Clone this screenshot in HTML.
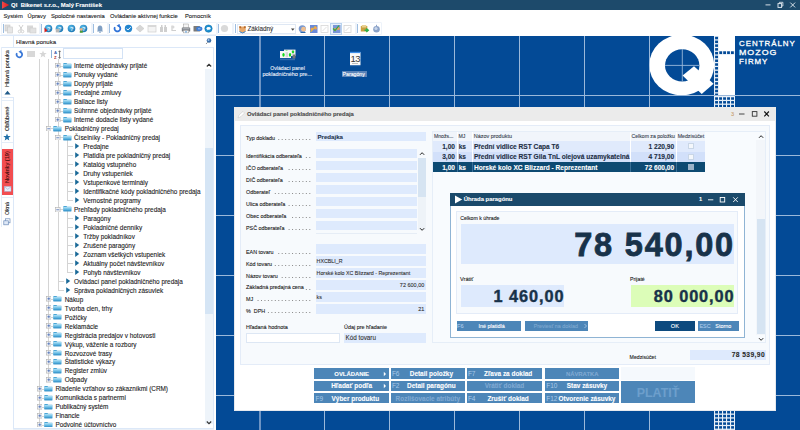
<!DOCTYPE html><html><head><meta charset="utf-8"><style>
*{margin:0;padding:0;box-sizing:border-box}
html,body{width:800px;height:430px;overflow:hidden;background:#fff;font-family:"Liberation Sans",sans-serif}
div{position:absolute}
.t{white-space:nowrap;line-height:1;-webkit-text-stroke:0.1px currentColor}
.vt{transform-origin:0 0;transform:rotate(-90deg)}
</style></head><body><div style="left:0px;top:0px;width:800px;height:10px;background:#1d4a6b"></div>
<svg style="position:absolute;left:1px;top:0px" width="10" height="10" viewBox="0 0 10 10"><defs><linearGradient id="rg" x1="0" y1="0" x2="1" y2="0"><stop offset="0" stop-color="#f04a4a"/><stop offset="1" stop-color="#e01818"/></linearGradient></defs><polygon points="1,1.2 8.2,4.9 1,8.8" fill="url(#rg)"/></svg>
<div class="t" style="left:11.10px;top:2.58px;font-size:5.93px;color:#fff;font-weight:bold">QI&nbsp; Bikenet s.r.o., Malý František</div>
<svg style="position:absolute;left:760px;top:0px" width="40" height="10" viewBox="0 0 40 10"><line x1="5.5" y1="4.9" x2="10.5" y2="4.9" stroke="#e8eef4" stroke-width="0.9"/><rect x="18" y="3.6" width="3.6" height="3.8" fill="none" stroke="#e8eef4" stroke-width="0.9"/><path d="M19.4 3.3V2.3h3.5v3.7h-1" fill="none" stroke="#e8eef4" stroke-width="0.8"/><path d="M30.3 2.6l4.8 4.8M35.1 2.6l-4.8 4.8" stroke="#e8eef4" stroke-width="0.9"/></svg>
<div class="t" style="left:3.40px;top:14.49px;font-size:5.8px;color:#1a1a1a">Systém</div>
<div class="t" style="left:27.50px;top:14.49px;font-size:5.8px;color:#1a1a1a">Úpravy</div>
<div class="t" style="left:50.90px;top:14.49px;font-size:5.8px;color:#1a1a1a">Spoločné nastavenia</div>
<div class="t" style="left:110.00px;top:14.49px;font-size:5.8px;color:#1a1a1a">Ovládanie aktívnej funkcie</div>
<div class="t" style="left:185.00px;top:14.49px;font-size:5.8px;color:#1a1a1a">Pomocník</div>
<div style="left:0px;top:35px;width:216px;height:1px;background:#dce8f8"></div>
<div style="left:2.5px;top:24px;width:1px;height:9px;background:#9dbde0"></div>
<div style="left:41.2px;top:24px;width:1px;height:9px;background:#9dbde0"></div>
<div style="left:93px;top:24px;width:1px;height:9px;background:#9dbde0"></div>
<div style="left:109.3px;top:24px;width:1px;height:9px;background:#9dbde0"></div>
<div style="left:218px;top:24px;width:1px;height:9px;background:#9dbde0"></div>
<div style="left:234.5px;top:24px;width:1px;height:9px;background:#9dbde0"></div>
<div style="left:357px;top:24px;width:1px;height:9px;background:#9dbde0"></div>
<div style="left:1px;top:22px;width:39px;height:13px;border:1px solid #eef3fa;border-radius:1px"></div>
<div style="left:40px;top:22px;width:52px;height:13px;border:1px solid #eef3fa;border-radius:1px"></div>
<div style="left:92px;top:22px;width:16px;height:13px;border:1px solid #eef3fa;border-radius:1px"></div>
<div style="left:108px;top:22px;width:109px;height:13px;border:1px solid #eef3fa;border-radius:1px"></div>
<div style="left:217px;top:22px;width:16px;height:13px;border:1px solid #eef3fa;border-radius:1px"></div>
<div style="left:233px;top:22px;width:123px;height:13px;border:1px solid #eef3fa;border-radius:1px"></div>
<div style="left:356px;top:22px;width:26px;height:13px;border:1px solid #eef3fa;border-radius:1px"></div>
<svg style="position:absolute;left:4px;top:24px" width="10" height="10" viewBox="0 0 10 10"><rect x="1" y="1" width="5" height="6" fill="#ddd" stroke="#c8c8c8" stroke-width="0.6"/><rect x="3.5" y="3" width="5" height="6" fill="#e6e6e6" stroke="#c8c8c8" stroke-width="0.6"/></svg>
<svg style="position:absolute;left:17px;top:24px" width="8" height="10" viewBox="0 0 8 10"><path d="M2 1l3 5M6 1l-3 5" stroke="#c4c4c4" stroke-width="0.8"/><circle cx="2.5" cy="7.5" r="1.3" fill="none" stroke="#c4c4c4" stroke-width="0.7"/><circle cx="5.5" cy="7.5" r="1.3" fill="none" stroke="#c4c4c4" stroke-width="0.7"/></svg>
<svg style="position:absolute;left:26px;top:24px" width="11" height="10" viewBox="0 0 11 10"><rect x="1" y="1.5" width="6" height="7" fill="#d8d8d8"/><rect x="4" y="4" width="6" height="5" fill="#e2e2e2" stroke="#c8c8c8" stroke-width="0.5"/></svg>
<svg style="position:absolute;left:43.9px;top:24.4px" width="9" height="9" viewBox="0 0 9 9"><defs><radialGradient id="hg" cx="0.4" cy="0.35" r="0.7"><stop offset="0" stop-color="#5cc0ee"/><stop offset="1" stop-color="#1672b0"/></radialGradient></defs><circle cx="4.5" cy="4.5" r="3.8" fill="url(#hg)"/><text x="4.6" y="6.5" font-size="5.6" font-weight="bold" text-anchor="middle" fill="#e8f4fc" font-family="Liberation Sans">?</text><path d="M0.5 3.5l3 3-3 2z" fill="#d81e1e"/></svg>
<svg style="position:absolute;left:55.4px;top:24.4px" width="9" height="9" viewBox="0 0 9 9"><defs><radialGradient id="hg" cx="0.4" cy="0.35" r="0.7"><stop offset="0" stop-color="#5cc0ee"/><stop offset="1" stop-color="#1672b0"/></radialGradient></defs><circle cx="4.5" cy="4.5" r="3.8" fill="url(#hg)"/><text x="4.6" y="6.5" font-size="5.6" font-weight="bold" text-anchor="middle" fill="#e8f4fc" font-family="Liberation Sans">?</text><rect x="0.8" y="4.8" width="3.6" height="3.6" fill="#b8b8b8"/></svg>
<svg style="position:absolute;left:66.9px;top:24.4px" width="9" height="9" viewBox="0 0 9 9"><defs><radialGradient id="hg" cx="0.4" cy="0.35" r="0.7"><stop offset="0" stop-color="#5cc0ee"/><stop offset="1" stop-color="#1672b0"/></radialGradient></defs><circle cx="4.5" cy="4.5" r="3.8" fill="url(#hg)"/><text x="4.6" y="6.5" font-size="5.6" font-weight="bold" text-anchor="middle" fill="#e8f4fc" font-family="Liberation Sans">?</text></svg>
<svg style="position:absolute;left:78.9px;top:24.4px" width="9" height="9" viewBox="0 0 9 9"><defs><radialGradient id="hg" cx="0.4" cy="0.35" r="0.7"><stop offset="0" stop-color="#5cc0ee"/><stop offset="1" stop-color="#1672b0"/></radialGradient></defs><circle cx="4.5" cy="4.5" r="3.8" fill="url(#hg)"/><text x="4.6" y="6.5" font-size="5.6" font-weight="bold" text-anchor="middle" fill="#e8f4fc" font-family="Liberation Sans">?</text><circle cx="2.3" cy="5.5" r="1.4" fill="#e8b48a"/><rect x="0.8" y="6.8" width="3" height="2" fill="#4a9a3a"/></svg>
<svg style="position:absolute;left:96px;top:24px" width="8" height="10" viewBox="0 0 8 10"><path d="M4 1.5c-1.8 0-2.4 1.5-2.4 3v2L1 7.5h6l-.6-1v-2c0-1.5-.6-3-2.4-3z" fill="#7f9fc4"/><circle cx="4" cy="8.3" r="0.8" fill="#7f9fc4"/></svg>
<svg style="position:absolute;left:112.5px;top:24.2px" width="9" height="9" viewBox="0 0 9 9"><path d="M1.9 3.1A2.9 2.9 0 1 0 5.2 1.7" fill="none" stroke="#2f72d8" stroke-width="1.8"/><path d="M3.6 1.7L6.6 -0.2 6.6 3.6z" fill="#2f72d8"/></svg>
<svg style="position:absolute;left:123.5px;top:24px" width="9" height="9" viewBox="0 0 9 9"><circle cx="4.5" cy="4.5" r="3.7" fill="#2486cf"/><path d="M2.5 4.6l1.4 1.4 2.8-2.8" stroke="#fff" stroke-width="1" fill="none"/></svg>
<svg style="position:absolute;left:134.5px;top:24px" width="10" height="9" viewBox="0 0 10 9"><path d="M5 1l4 3.5-4 3.5-4-3.5z" fill="#d6d6d6" stroke="#c6c6c6" stroke-width="0.5"/></svg>
<svg style="position:absolute;left:146.5px;top:24px" width="10" height="9" viewBox="0 0 10 9"><rect x="1" y="1.5" width="8" height="6.5" fill="#f4f4f4" stroke="#cfcfcf" stroke-width="0.7"/><rect x="1" y="1.5" width="8" height="1.5" fill="#d8d8d8"/></svg>
<svg style="position:absolute;left:158.5px;top:24px" width="9" height="9" viewBox="0 0 9 9"><rect x="1" y="3" width="3" height="5" fill="#cfcfcf"/><rect x="5" y="3" width="3" height="5" fill="#cfcfcf"/><rect x="2" y="1" width="1.5" height="3" fill="#cfcfcf"/><rect x="5.5" y="1" width="1.5" height="3" fill="#cfcfcf"/></svg>
<svg style="position:absolute;left:169.5px;top:24px" width="9" height="10" viewBox="0 0 9 10"><path d="M2 1.5v5h4" stroke="#cfcfcf" stroke-width="1.2" fill="none"/><circle cx="3" cy="3" r="1.5" fill="#d8d8d8"/></svg>
<svg style="position:absolute;left:180.5px;top:23px" width="10" height="11" viewBox="0 0 10 11"><rect x="2.5" y="1" width="5" height="4" fill="#f4f4f4" stroke="#9a9a9a" stroke-width="0.5"/><rect x="0.8" y="4.5" width="8.4" height="4" rx="0.6" fill="#7a7e84"/><rect x="1.6" y="5.3" width="6.8" height="1" fill="#b8bcc2"/><rect x="2.2" y="7.3" width="5.6" height="2.6" fill="#fafafa" stroke="#888" stroke-width="0.4"/><rect x="4.5" y="8" width="1" height="1.6" fill="#3a8ad8"/></svg>
<svg style="position:absolute;left:192.5px;top:24px" width="10" height="9" viewBox="0 0 10 9"><rect x="0.5" y="2" width="6.5" height="5.5" rx="0.5" fill="#7a7a7a"/><ellipse cx="6.3" cy="4.8" rx="3.1" ry="2.3" fill="#3f7ed6"/><path d="M5 4.8h2.5" stroke="#cfe0f6" stroke-width="0.7"/></svg>
<svg style="position:absolute;left:204.3px;top:24px" width="9" height="9" viewBox="0 0 9 9"><circle cx="4.5" cy="4.6" r="3.7" fill="#1b8fd0"/><circle cx="4.5" cy="4.6" r="3.7" fill="none" stroke="#0f6aa8" stroke-width="0.5"/><ellipse cx="4.6" cy="4.4" rx="2.1" ry="1.4" fill="#fff"/><path d="M3.5 5.2l-0.8 1.3 1.8-0.9z" fill="#fff"/></svg>
<svg style="position:absolute;left:220.2px;top:24px" width="9" height="9" viewBox="0 0 9 9"><circle cx="4.5" cy="4.5" r="3.6" fill="#d9d9d9"/></svg>
<div style="left:236.5px;top:23.5px;width:59px;height:10.5px;background:#fff;border:1px solid #dfe8f4"></div>
<svg style="position:absolute;left:238px;top:24.5px" width="9" height="9" viewBox="0 0 9 9"><circle cx="4.5" cy="4.8" r="3.3" fill="#e8a86a"/><rect x="1.2" y="1.2" width="2" height="2" fill="#b86a2a"/><rect x="5.8" y="1.2" width="2" height="2" fill="#b86a2a"/><path d="M1.5 6.5q3 3 6 0" stroke="#3a8ad8" stroke-width="1" fill="none"/></svg>
<div class="t" style="left:247.50px;top:25.97px;font-size:6.3px;color:#333">Základný</div>
<svg style="position:absolute;left:291px;top:27.5px" width="4" height="3" viewBox="0 0 4 3"><path d="M0 0.5h3.5L1.75 2.8z" fill="#444"/></svg>
<svg style="position:absolute;left:298px;top:24px" width="9" height="10" viewBox="0 0 9 10"><circle cx="4.3" cy="4.8" r="3.6" fill="#7a9ad0"/><circle cx="5.5" cy="5.2" r="2.4" fill="#f0c090"/><path d="M2.5 8.5h5" stroke="#2a6ab0" stroke-width="1"/></svg>
<svg style="position:absolute;left:309px;top:24px" width="9" height="10" viewBox="0 0 9 10"><rect x="1" y="1" width="7.5" height="8" fill="#6a8ad8"/><circle cx="3" cy="5" r="1.6" fill="#e8a060"/><circle cx="6.5" cy="4" r="1.6" fill="#e8a060"/><path d="M1.5 8l5-6" stroke="#f0c020" stroke-width="1"/></svg>
<svg style="position:absolute;left:320px;top:24px" width="9" height="10" viewBox="0 0 9 10"><rect x="1" y="1.5" width="7" height="7" fill="none" stroke="#d8d8d8" stroke-width="0.8"/><path d="M2.5 7l4-4" stroke="#d8d8d8" stroke-width="0.8"/></svg>
<div style="left:330px;top:23px;width:12px;height:12px;background:#e6f0fb;border:1px solid #b8d2ee"></div>
<svg style="position:absolute;left:331.5px;top:24px" width="9" height="10" viewBox="0 0 9 10"><rect x="1" y="1" width="7.5" height="8" fill="#7a96d8"/><circle cx="3" cy="5.5" r="1.6" fill="#e8a060"/><circle cx="6.3" cy="4.5" r="1.6" fill="#e8a060"/><path d="M1 4.5l2 2 4-5" stroke="#2ea84a" stroke-width="1.2" fill="none"/></svg>
<svg style="position:absolute;left:342.5px;top:24px" width="9" height="10" viewBox="0 0 9 10"><rect x="1" y="1.5" width="7" height="7" fill="none" stroke="#d4d4d4" stroke-width="0.8"/><path d="M2.5 7l4-4" stroke="#d4d4d4" stroke-width="0.8"/></svg>
<svg style="position:absolute;left:359.5px;top:24px" width="10" height="10" viewBox="0 0 10 10"><rect x="0.8" y="2" width="6.5" height="5.5" fill="#c8a040"/><rect x="1.8" y="1" width="4.5" height="2.5" fill="#e8d090"/><path d="M4.5 6.2h3.3M6.3 4.4l2 1.8-2 1.8" stroke="#2eb04a" stroke-width="1.4" fill="none"/></svg>
<svg style="position:absolute;left:371.5px;top:24px" width="9" height="10" viewBox="0 0 9 10"><circle cx="4.5" cy="5.2" r="3.3" fill="#8aa2c8"/><circle cx="4" cy="4.5" r="1.6" fill="#c8d6ea"/><rect x="4" y="0.8" width="1" height="1.5" fill="#8aa2c8"/></svg>
<div style="left:13px;top:35px;width:1px;height:12px;background:#dce8f8"></div>
<div class="t" style="left:16.00px;top:38.72px;font-size:6.0px;color:#222">Hlavná ponuka</div>
<svg style="position:absolute;left:204.5px;top:37px" width="8" height="8" viewBox="0 0 8 8"><circle cx="4" cy="3.5" r="2.3" fill="#3a6ea8"/><circle cx="3.5" cy="3" r="1" fill="#9ec2ea"/><path d="M2.6 5.3L1 7" stroke="#777" stroke-width="0.8"/></svg>
<div style="left:1px;top:47px;width:213px;height:1px;background:#dce8f8"></div>
<div style="left:1px;top:47px;width:1px;height:180px;background:#e4edf8"></div>
<div style="left:12.5px;top:97px;width:1px;height:333px;background:#dce8f8"></div>
<div style="left:2px;top:97px;width:11px;height:1px;background:#dce8f8"></div>
<div class="t vt" style="left:4.80px;top:87.00px;font-size:5.5px;color:#222">Hlavná ponuka</div>
<svg style="position:absolute;left:4px;top:89.5px" width="8" height="5" viewBox="0 0 8 5"><path d="M0.5 4.5L3.5 0.8 6.5 4.5z" fill="#1f5a8a"/></svg>
<div style="left:2px;top:100px;width:11px;height:1px;background:#e4edf8"></div>
<div class="t vt" style="left:4.90px;top:131.20px;font-size:5.55px;color:#222">Obľúbené</div>
<svg style="position:absolute;left:2.5px;top:132.5px" width="8" height="8" viewBox="0 0 8 8"><polygon points="4,0.5 5,3 7.7,3.1 5.6,4.8 6.3,7.5 4,6 1.7,7.5 2.4,4.8 0.3,3.1 3,3" fill="#1f6fa8"/></svg>
<div style="left:2px;top:142px;width:11px;height:1px;background:#e4edf8"></div>
<div style="left:2px;top:149px;width:11px;height:45.5px;background:#f24d50"></div>
<div class="t vt" style="left:4.90px;top:183.00px;font-size:5.7px;color:#3a0c0c">Novinky (19)</div>
<svg style="position:absolute;left:3.5px;top:185.5px" width="8" height="6" viewBox="0 0 8 6"><rect x="0.5" y="0.5" width="6.5" height="4.8" fill="#e8eefa" stroke="#a8b8d8" stroke-width="0.5"/><path d="M0.5 0.8l3.25 2.5 3.25-2.5" stroke="#8aa0c8" stroke-width="0.5" fill="none"/></svg>
<div style="left:2px;top:197px;width:11px;height:1px;background:#e4edf8"></div>
<div class="t vt" style="left:4.90px;top:215.30px;font-size:5.4px;color:#222">Okná</div>
<svg style="position:absolute;left:3px;top:218px" width="8" height="8" viewBox="0 0 8 8"><rect x="2.5" y="0.8" width="4.5" height="4" fill="#fff" stroke="#6a8ab8" stroke-width="0.7"/><rect x="0.8" y="2.8" width="4.5" height="4" fill="#dfe8f6" stroke="#6a8ab8" stroke-width="0.7"/></svg>
<svg style="position:absolute;left:15.3px;top:49.6px" width="9" height="9" viewBox="0 0 9 9"><path d="M1.9 3.1A2.8 2.8 0 1 0 5.1 1.8" fill="none" stroke="#3a78d8" stroke-width="1.8"/><path d="M3.5 1.8L6.4 -0.1 6.4 3.6z" fill="#3a78d8"/></svg>
<div style="left:27px;top:51px;width:8px;height:5.5px;background:#d8d8d8"></div>
<svg style="position:absolute;left:38.5px;top:49.5px" width="8" height="8" viewBox="0 0 8 8"><polygon points="4,0.5 5,3 7.7,3.1 5.6,4.8 6.3,7.5 4,6 1.7,7.5 2.4,4.8 0.3,3.1 3,3" fill="#d6d6d6"/></svg>
<div style="left:50.5px;top:50px;width:1px;height:7.5px;background:#8fb3d9"></div>
<svg style="position:absolute;left:54px;top:49.5px" width="7" height="9" viewBox="0 0 7 9"><text x="0" y="4" font-size="4.2" font-weight="bold" fill="#3a5aa8" font-family="Liberation Sans">A</text><text x="0" y="8.5" font-size="4.2" font-weight="bold" fill="#b03030" font-family="Liberation Sans">Z</text><path d="M5.6 0.8v7.5M4.6 1.8l1-1 1 1M4.6 7.3l1 1 1-1" stroke="#222" stroke-width="0.6" fill="none"/></svg>
<div style="left:63px;top:48px;width:59.5px;height:10.5px;background:#fff;border:1px solid #d3e2f5"></div>
<div style="left:204.5px;top:68.5px;width:8.5px;height:355px;background:#eef4fa"></div>
<div style="left:204.5px;top:148px;width:8.5px;height:166px;background:#d5e5f5"></div>
<svg style="position:absolute;left:205px;top:61.5px" width="8" height="6" viewBox="0 0 8 6"><path d="M1.8 4.5l2.2-2.2 2.2 2.2" stroke="#333" stroke-width="1.1" fill="none"/></svg>
<svg style="position:absolute;left:205px;top:420px" width="8" height="6" viewBox="0 0 8 6"><path d="M1.8 1.5l2.2 2.2 2.2-2.2" stroke="#333" stroke-width="1.1" fill="none"/></svg>
<div style="left:213px;top:47px;width:1px;height:381px;background:#dce8f8"></div>
<div style="left:13px;top:427.5px;width:201px;height:1px;background:#dce8f8"></div>
<div style="left:13px;top:428.5px;width:201px;height:1.5px;background:#eaf0f7"></div>
<div style="left:0;top:59px;width:204px;height:368px;overflow:hidden">
<div style="left:39.25px;top:0px;width:1px;height:368px;background:#d4d4d4"></div>
<div style="left:48px;top:0px;width:1px;height:321.57499999999993px;background:#d4d4d4"></div>
<div style="left:57.75px;top:0px;width:1px;height:231.72500000000002px;background:#d4d4d4"></div>
<div style="left:67px;top:80.47999999999999px;width:1px;height:61.39499999999998px;background:#d4d4d4"></div>
<div style="left:67px;top:152.35999999999999px;width:1px;height:61.39500000000001px;background:#d4d4d4"></div>
<div style="left:60.0px;top:6.599999999999994px;width:2.5px;height:1px;background:#d4d4d4"></div>
<svg style="position:absolute;left:55.0px;top:3.8499999999999943px" width="5.6" height="5.6"><rect x="0.5" y="0.5" width="4.6" height="4.6" fill="#f4f4f4" stroke="#b0b0b0" stroke-width="0.6"/><path d="M1.3 2.75h3" stroke="#3a62b0" stroke-width="0.7"/><path d="M2.8 1.25v3" stroke="#3a62b0" stroke-width="0.7"/></svg>
<svg style="position:absolute;left:62.5px;top:2.6999999999999944px" width="9" height="7"><defs><linearGradient id="fg" x1="0" y1="0" x2="0" y2="1"><stop offset="0" stop-color="#b4e2f6"/><stop offset="0.55" stop-color="#62b8e2"/><stop offset="1" stop-color="#2a88c2"/></linearGradient></defs><path d="M0.4 0.9h3l0.8 0.8h4.1v4.6H0.4z" fill="#4aa6d6"/><path d="M0.4 2h7.9v4.3H0.4z" fill="url(#fg)"/></svg>
<div class="t" style="left:74.00px;top:3.98px;font-size:6.4px;color:#1a1a1a">Interné objednávky prijaté</div>
<div style="left:60.0px;top:15.584999999999994px;width:2.5px;height:1px;background:#d4d4d4"></div>
<svg style="position:absolute;left:55.0px;top:12.834999999999994px" width="5.6" height="5.6"><rect x="0.5" y="0.5" width="4.6" height="4.6" fill="#f4f4f4" stroke="#b0b0b0" stroke-width="0.6"/><path d="M1.3 2.75h3" stroke="#3a62b0" stroke-width="0.7"/><path d="M2.8 1.25v3" stroke="#3a62b0" stroke-width="0.7"/></svg>
<svg style="position:absolute;left:62.5px;top:11.684999999999993px" width="9" height="7"><defs><linearGradient id="fg" x1="0" y1="0" x2="0" y2="1"><stop offset="0" stop-color="#b4e2f6"/><stop offset="0.55" stop-color="#62b8e2"/><stop offset="1" stop-color="#2a88c2"/></linearGradient></defs><path d="M0.4 0.9h3l0.8 0.8h4.1v4.6H0.4z" fill="#4aa6d6"/><path d="M0.4 2h7.9v4.3H0.4z" fill="url(#fg)"/></svg>
<div class="t" style="left:74.00px;top:12.97px;font-size:6.4px;color:#1a1a1a">Ponuky vydané</div>
<div style="left:60.0px;top:24.569999999999993px;width:2.5px;height:1px;background:#d4d4d4"></div>
<svg style="position:absolute;left:55.0px;top:21.819999999999993px" width="5.6" height="5.6"><rect x="0.5" y="0.5" width="4.6" height="4.6" fill="#f4f4f4" stroke="#b0b0b0" stroke-width="0.6"/><path d="M1.3 2.75h3" stroke="#3a62b0" stroke-width="0.7"/><path d="M2.8 1.25v3" stroke="#3a62b0" stroke-width="0.7"/></svg>
<svg style="position:absolute;left:62.5px;top:20.669999999999995px" width="9" height="7"><defs><linearGradient id="fg" x1="0" y1="0" x2="0" y2="1"><stop offset="0" stop-color="#b4e2f6"/><stop offset="0.55" stop-color="#62b8e2"/><stop offset="1" stop-color="#2a88c2"/></linearGradient></defs><path d="M0.4 0.9h3l0.8 0.8h4.1v4.6H0.4z" fill="#4aa6d6"/><path d="M0.4 2h7.9v4.3H0.4z" fill="url(#fg)"/></svg>
<div class="t" style="left:74.00px;top:21.95px;font-size:6.4px;color:#1a1a1a">Dopyty prijaté</div>
<div style="left:60.0px;top:33.55499999999999px;width:2.5px;height:1px;background:#d4d4d4"></div>
<svg style="position:absolute;left:55.0px;top:30.804999999999993px" width="5.6" height="5.6"><rect x="0.5" y="0.5" width="4.6" height="4.6" fill="#f4f4f4" stroke="#b0b0b0" stroke-width="0.6"/><path d="M1.3 2.75h3" stroke="#3a62b0" stroke-width="0.7"/><path d="M2.8 1.25v3" stroke="#3a62b0" stroke-width="0.7"/></svg>
<svg style="position:absolute;left:62.5px;top:29.654999999999994px" width="9" height="7"><defs><linearGradient id="fg" x1="0" y1="0" x2="0" y2="1"><stop offset="0" stop-color="#b4e2f6"/><stop offset="0.55" stop-color="#62b8e2"/><stop offset="1" stop-color="#2a88c2"/></linearGradient></defs><path d="M0.4 0.9h3l0.8 0.8h4.1v4.6H0.4z" fill="#4aa6d6"/><path d="M0.4 2h7.9v4.3H0.4z" fill="url(#fg)"/></svg>
<div class="t" style="left:74.00px;top:30.94px;font-size:6.4px;color:#1a1a1a">Predajné zmluvy</div>
<div style="left:60.0px;top:42.53999999999999px;width:2.5px;height:1px;background:#d4d4d4"></div>
<svg style="position:absolute;left:55.0px;top:39.78999999999999px" width="5.6" height="5.6"><rect x="0.5" y="0.5" width="4.6" height="4.6" fill="#f4f4f4" stroke="#b0b0b0" stroke-width="0.6"/><path d="M1.3 2.75h3" stroke="#3a62b0" stroke-width="0.7"/><path d="M2.8 1.25v3" stroke="#3a62b0" stroke-width="0.7"/></svg>
<svg style="position:absolute;left:62.5px;top:38.63999999999999px" width="9" height="7"><defs><linearGradient id="fg" x1="0" y1="0" x2="0" y2="1"><stop offset="0" stop-color="#b4e2f6"/><stop offset="0.55" stop-color="#62b8e2"/><stop offset="1" stop-color="#2a88c2"/></linearGradient></defs><path d="M0.4 0.9h3l0.8 0.8h4.1v4.6H0.4z" fill="#4aa6d6"/><path d="M0.4 2h7.9v4.3H0.4z" fill="url(#fg)"/></svg>
<div class="t" style="left:74.00px;top:39.92px;font-size:6.4px;color:#1a1a1a">Baliace listy</div>
<div style="left:60.0px;top:51.52499999999999px;width:2.5px;height:1px;background:#d4d4d4"></div>
<svg style="position:absolute;left:55.0px;top:48.77499999999999px" width="5.6" height="5.6"><rect x="0.5" y="0.5" width="4.6" height="4.6" fill="#f4f4f4" stroke="#b0b0b0" stroke-width="0.6"/><path d="M1.3 2.75h3" stroke="#3a62b0" stroke-width="0.7"/><path d="M2.8 1.25v3" stroke="#3a62b0" stroke-width="0.7"/></svg>
<svg style="position:absolute;left:62.5px;top:47.62499999999999px" width="9" height="7"><defs><linearGradient id="fg" x1="0" y1="0" x2="0" y2="1"><stop offset="0" stop-color="#b4e2f6"/><stop offset="0.55" stop-color="#62b8e2"/><stop offset="1" stop-color="#2a88c2"/></linearGradient></defs><path d="M0.4 0.9h3l0.8 0.8h4.1v4.6H0.4z" fill="#4aa6d6"/><path d="M0.4 2h7.9v4.3H0.4z" fill="url(#fg)"/></svg>
<div class="t" style="left:74.00px;top:48.91px;font-size:6.4px;color:#1a1a1a">Súhrnné objednávky prijaté</div>
<div style="left:60.0px;top:60.50999999999999px;width:2.5px;height:1px;background:#d4d4d4"></div>
<svg style="position:absolute;left:55.0px;top:57.75999999999999px" width="5.6" height="5.6"><rect x="0.5" y="0.5" width="4.6" height="4.6" fill="#f4f4f4" stroke="#b0b0b0" stroke-width="0.6"/><path d="M1.3 2.75h3" stroke="#3a62b0" stroke-width="0.7"/><path d="M2.8 1.25v3" stroke="#3a62b0" stroke-width="0.7"/></svg>
<svg style="position:absolute;left:62.5px;top:56.60999999999999px" width="9" height="7"><defs><linearGradient id="fg" x1="0" y1="0" x2="0" y2="1"><stop offset="0" stop-color="#b4e2f6"/><stop offset="0.55" stop-color="#62b8e2"/><stop offset="1" stop-color="#2a88c2"/></linearGradient></defs><path d="M0.4 0.9h3l0.8 0.8h4.1v4.6H0.4z" fill="#4aa6d6"/><path d="M0.4 2h7.9v4.3H0.4z" fill="url(#fg)"/></svg>
<div class="t" style="left:74.00px;top:57.89px;font-size:6.4px;color:#1a1a1a">Interné dodacie listy vydané</div>
<div style="left:50.75px;top:69.495px;width:2.5px;height:1px;background:#d4d4d4"></div>
<svg style="position:absolute;left:45.75px;top:66.745px" width="5.6" height="5.6"><rect x="0.5" y="0.5" width="4.6" height="4.6" fill="#f4f4f4" stroke="#b0b0b0" stroke-width="0.6"/><path d="M1.3 2.75h3" stroke="#3a62b0" stroke-width="0.7"/></svg>
<svg style="position:absolute;left:53.25px;top:65.595px" width="9" height="7"><defs><linearGradient id="fg" x1="0" y1="0" x2="0" y2="1"><stop offset="0" stop-color="#b4e2f6"/><stop offset="0.55" stop-color="#62b8e2"/><stop offset="1" stop-color="#2a88c2"/></linearGradient></defs><path d="M0.4 0.9h3l0.8 0.8h4.1v4.6H0.4z" fill="#4aa6d6"/><path d="M0.4 2h7.9v4.3H0.4z" fill="url(#fg)"/></svg>
<div class="t" style="left:64.75px;top:66.88px;font-size:6.4px;color:#1a1a1a">Pokladničný predaj</div>
<div style="left:60.0px;top:78.47999999999999px;width:2.5px;height:1px;background:#d4d4d4"></div>
<svg style="position:absolute;left:55.0px;top:75.72999999999999px" width="5.6" height="5.6"><rect x="0.5" y="0.5" width="4.6" height="4.6" fill="#f4f4f4" stroke="#b0b0b0" stroke-width="0.6"/><path d="M1.3 2.75h3" stroke="#3a62b0" stroke-width="0.7"/></svg>
<svg style="position:absolute;left:62.5px;top:74.57999999999998px" width="9" height="7"><defs><linearGradient id="fg" x1="0" y1="0" x2="0" y2="1"><stop offset="0" stop-color="#b4e2f6"/><stop offset="0.55" stop-color="#62b8e2"/><stop offset="1" stop-color="#2a88c2"/></linearGradient></defs><path d="M0.4 0.9h3l0.8 0.8h4.1v4.6H0.4z" fill="#4aa6d6"/><path d="M0.4 2h7.9v4.3H0.4z" fill="url(#fg)"/></svg>
<div class="t" style="left:74.00px;top:75.86px;font-size:6.4px;color:#1a1a1a">Číselníky - Pokladničný predaj</div>
<div style="left:67.0px;top:87.46499999999997px;width:5.75px;height:1px;background:#d4d4d4"></div>
<svg style="position:absolute;left:74.75px;top:84.26499999999997px" width="5" height="7"><path d="M0.2 0.2L4.2 3.1 0.2 6z" fill="#1b6a98"/></svg>
<div class="t" style="left:83.25px;top:84.85px;font-size:6.4px;color:#1a1a1a">Predajne</div>
<div style="left:67.0px;top:96.44999999999999px;width:5.75px;height:1px;background:#d4d4d4"></div>
<svg style="position:absolute;left:74.75px;top:93.24999999999999px" width="5" height="7"><path d="M0.2 0.2L4.2 3.1 0.2 6z" fill="#1b6a98"/></svg>
<div class="t" style="left:83.25px;top:93.83px;font-size:6.4px;color:#1a1a1a">Platidlá pre pokladničný predaj</div>
<div style="left:67.0px;top:105.435px;width:5.75px;height:1px;background:#d4d4d4"></div>
<svg style="position:absolute;left:74.75px;top:102.235px" width="5" height="7"><path d="M0.2 0.2L4.2 3.1 0.2 6z" fill="#1b6a98"/></svg>
<div class="t" style="left:83.25px;top:102.82px;font-size:6.4px;color:#1a1a1a">Katalóg vstupného</div>
<div style="left:67.0px;top:114.41999999999999px;width:5.75px;height:1px;background:#d4d4d4"></div>
<svg style="position:absolute;left:74.75px;top:111.21999999999998px" width="5" height="7"><path d="M0.2 0.2L4.2 3.1 0.2 6z" fill="#1b6a98"/></svg>
<div class="t" style="left:83.25px;top:111.80px;font-size:6.4px;color:#1a1a1a">Druhy vstupeniek</div>
<div style="left:67.0px;top:123.40499999999997px;width:5.75px;height:1px;background:#d4d4d4"></div>
<svg style="position:absolute;left:74.75px;top:120.20499999999997px" width="5" height="7"><path d="M0.2 0.2L4.2 3.1 0.2 6z" fill="#1b6a98"/></svg>
<div class="t" style="left:83.25px;top:120.79px;font-size:6.4px;color:#1a1a1a">Vstupenkové terminály</div>
<div style="left:67.0px;top:132.39px;width:5.75px;height:1px;background:#d4d4d4"></div>
<svg style="position:absolute;left:74.75px;top:129.19px" width="5" height="7"><path d="M0.2 0.2L4.2 3.1 0.2 6z" fill="#1b6a98"/></svg>
<div class="t" style="left:83.25px;top:129.77px;font-size:6.4px;color:#1a1a1a">Identifikačné kódy pokladničného predaja</div>
<div style="left:67.0px;top:141.37499999999997px;width:5.75px;height:1px;background:#d4d4d4"></div>
<svg style="position:absolute;left:74.75px;top:138.17499999999998px" width="5" height="7"><path d="M0.2 0.2L4.2 3.1 0.2 6z" fill="#1b6a98"/></svg>
<div class="t" style="left:83.25px;top:138.76px;font-size:6.4px;color:#1a1a1a">Vernostné programy</div>
<div style="left:60.0px;top:150.35999999999999px;width:2.5px;height:1px;background:#d4d4d4"></div>
<svg style="position:absolute;left:55.0px;top:147.60999999999999px" width="5.6" height="5.6"><rect x="0.5" y="0.5" width="4.6" height="4.6" fill="#f4f4f4" stroke="#b0b0b0" stroke-width="0.6"/><path d="M1.3 2.75h3" stroke="#3a62b0" stroke-width="0.7"/></svg>
<svg style="position:absolute;left:62.5px;top:146.45999999999998px" width="9" height="7"><defs><linearGradient id="fg" x1="0" y1="0" x2="0" y2="1"><stop offset="0" stop-color="#b4e2f6"/><stop offset="0.55" stop-color="#62b8e2"/><stop offset="1" stop-color="#2a88c2"/></linearGradient></defs><path d="M0.4 0.9h3l0.8 0.8h4.1v4.6H0.4z" fill="#4aa6d6"/><path d="M0.4 2h7.9v4.3H0.4z" fill="url(#fg)"/></svg>
<div class="t" style="left:74.00px;top:147.74px;font-size:6.4px;color:#1a1a1a">Prehľady pokladničného predaja</div>
<div style="left:67.0px;top:159.345px;width:5.75px;height:1px;background:#d4d4d4"></div>
<svg style="position:absolute;left:74.75px;top:156.145px" width="5" height="7"><path d="M0.2 0.2L4.2 3.1 0.2 6z" fill="#1b6a98"/></svg>
<div class="t" style="left:83.25px;top:156.73px;font-size:6.4px;color:#1a1a1a">Paragóny</div>
<div style="left:67.0px;top:168.32999999999998px;width:5.75px;height:1px;background:#d4d4d4"></div>
<svg style="position:absolute;left:74.75px;top:165.13px" width="5" height="7"><path d="M0.2 0.2L4.2 3.1 0.2 6z" fill="#1b6a98"/></svg>
<div class="t" style="left:83.25px;top:165.71px;font-size:6.4px;color:#1a1a1a">Pokladničné denníky</div>
<div style="left:67.0px;top:177.31499999999997px;width:5.75px;height:1px;background:#d4d4d4"></div>
<svg style="position:absolute;left:74.75px;top:174.11499999999998px" width="5" height="7"><path d="M0.2 0.2L4.2 3.1 0.2 6z" fill="#1b6a98"/></svg>
<div class="t" style="left:83.25px;top:174.70px;font-size:6.4px;color:#1a1a1a">Tržby pokladníkov</div>
<div style="left:67.0px;top:186.29999999999998px;width:5.75px;height:1px;background:#d4d4d4"></div>
<svg style="position:absolute;left:74.75px;top:183.1px" width="5" height="7"><path d="M0.2 0.2L4.2 3.1 0.2 6z" fill="#1b6a98"/></svg>
<div class="t" style="left:83.25px;top:183.68px;font-size:6.4px;color:#1a1a1a">Zrušené paragóny</div>
<div style="left:67.0px;top:195.285px;width:5.75px;height:1px;background:#d4d4d4"></div>
<svg style="position:absolute;left:74.75px;top:192.085px" width="5" height="7"><path d="M0.2 0.2L4.2 3.1 0.2 6z" fill="#1b6a98"/></svg>
<div class="t" style="left:83.25px;top:192.67px;font-size:6.4px;color:#1a1a1a">Zoznam všetkých vstupeniek</div>
<div style="left:67.0px;top:204.26999999999998px;width:5.75px;height:1px;background:#d4d4d4"></div>
<svg style="position:absolute;left:74.75px;top:201.07px" width="5" height="7"><path d="M0.2 0.2L4.2 3.1 0.2 6z" fill="#1b6a98"/></svg>
<div class="t" style="left:83.25px;top:201.65px;font-size:6.4px;color:#1a1a1a">Aktuálny počet návštevníkov</div>
<div style="left:67.0px;top:213.255px;width:5.75px;height:1px;background:#d4d4d4"></div>
<svg style="position:absolute;left:74.75px;top:210.055px" width="5" height="7"><path d="M0.2 0.2L4.2 3.1 0.2 6z" fill="#1b6a98"/></svg>
<div class="t" style="left:83.25px;top:210.64px;font-size:6.4px;color:#1a1a1a">Pohyb návštevníkov</div>
<div style="left:57.75px;top:222.24px;width:5.75px;height:1px;background:#d4d4d4"></div>
<svg style="position:absolute;left:65.5px;top:219.04000000000002px" width="5" height="7"><path d="M0.2 0.2L4.2 3.1 0.2 6z" fill="#1b6a98"/></svg>
<div class="t" style="left:74.00px;top:219.62px;font-size:6.4px;color:#1a1a1a">Ovládací panel pokladničného predaja</div>
<div style="left:57.75px;top:231.22500000000002px;width:5.75px;height:1px;background:#d4d4d4"></div>
<svg style="position:absolute;left:65.5px;top:228.02500000000003px" width="5" height="7"><path d="M0.2 0.2L4.2 3.1 0.2 6z" fill="#1b6a98"/></svg>
<div class="t" style="left:74.00px;top:228.61px;font-size:6.4px;color:#1a1a1a">Správa pokladničných zásuviek</div>
<div style="left:50.75px;top:240.20999999999998px;width:2.5px;height:1px;background:#d4d4d4"></div>
<svg style="position:absolute;left:45.75px;top:237.45999999999998px" width="5.6" height="5.6"><rect x="0.5" y="0.5" width="4.6" height="4.6" fill="#f4f4f4" stroke="#b0b0b0" stroke-width="0.6"/><path d="M1.3 2.75h3" stroke="#3a62b0" stroke-width="0.7"/><path d="M2.8 1.25v3" stroke="#3a62b0" stroke-width="0.7"/></svg>
<svg style="position:absolute;left:53.25px;top:236.30999999999997px" width="9" height="7"><defs><linearGradient id="fg" x1="0" y1="0" x2="0" y2="1"><stop offset="0" stop-color="#b4e2f6"/><stop offset="0.55" stop-color="#62b8e2"/><stop offset="1" stop-color="#2a88c2"/></linearGradient></defs><path d="M0.4 0.9h3l0.8 0.8h4.1v4.6H0.4z" fill="#4aa6d6"/><path d="M0.4 2h7.9v4.3H0.4z" fill="url(#fg)"/></svg>
<div class="t" style="left:64.75px;top:237.59px;font-size:6.4px;color:#1a1a1a">Nákup</div>
<div style="left:50.75px;top:249.19499999999994px;width:2.5px;height:1px;background:#d4d4d4"></div>
<svg style="position:absolute;left:45.75px;top:246.44499999999994px" width="5.6" height="5.6"><rect x="0.5" y="0.5" width="4.6" height="4.6" fill="#f4f4f4" stroke="#b0b0b0" stroke-width="0.6"/><path d="M1.3 2.75h3" stroke="#3a62b0" stroke-width="0.7"/><path d="M2.8 1.25v3" stroke="#3a62b0" stroke-width="0.7"/></svg>
<svg style="position:absolute;left:53.25px;top:245.29499999999993px" width="9" height="7"><defs><linearGradient id="fg" x1="0" y1="0" x2="0" y2="1"><stop offset="0" stop-color="#b4e2f6"/><stop offset="0.55" stop-color="#62b8e2"/><stop offset="1" stop-color="#2a88c2"/></linearGradient></defs><path d="M0.4 0.9h3l0.8 0.8h4.1v4.6H0.4z" fill="#4aa6d6"/><path d="M0.4 2h7.9v4.3H0.4z" fill="url(#fg)"/></svg>
<div class="t" style="left:64.75px;top:246.58px;font-size:6.4px;color:#1a1a1a">Tvorba cien, trhy</div>
<div style="left:50.75px;top:258.17999999999995px;width:2.5px;height:1px;background:#d4d4d4"></div>
<svg style="position:absolute;left:45.75px;top:255.42999999999995px" width="5.6" height="5.6"><rect x="0.5" y="0.5" width="4.6" height="4.6" fill="#f4f4f4" stroke="#b0b0b0" stroke-width="0.6"/><path d="M1.3 2.75h3" stroke="#3a62b0" stroke-width="0.7"/><path d="M2.8 1.25v3" stroke="#3a62b0" stroke-width="0.7"/></svg>
<svg style="position:absolute;left:53.25px;top:254.27999999999994px" width="9" height="7"><defs><linearGradient id="fg" x1="0" y1="0" x2="0" y2="1"><stop offset="0" stop-color="#b4e2f6"/><stop offset="0.55" stop-color="#62b8e2"/><stop offset="1" stop-color="#2a88c2"/></linearGradient></defs><path d="M0.4 0.9h3l0.8 0.8h4.1v4.6H0.4z" fill="#4aa6d6"/><path d="M0.4 2h7.9v4.3H0.4z" fill="url(#fg)"/></svg>
<div class="t" style="left:64.75px;top:255.56px;font-size:6.4px;color:#1a1a1a">Požičky</div>
<div style="left:50.75px;top:267.16499999999996px;width:2.5px;height:1px;background:#d4d4d4"></div>
<svg style="position:absolute;left:45.75px;top:264.41499999999996px" width="5.6" height="5.6"><rect x="0.5" y="0.5" width="4.6" height="4.6" fill="#f4f4f4" stroke="#b0b0b0" stroke-width="0.6"/><path d="M1.3 2.75h3" stroke="#3a62b0" stroke-width="0.7"/><path d="M2.8 1.25v3" stroke="#3a62b0" stroke-width="0.7"/></svg>
<svg style="position:absolute;left:53.25px;top:263.265px" width="9" height="7"><defs><linearGradient id="fg" x1="0" y1="0" x2="0" y2="1"><stop offset="0" stop-color="#b4e2f6"/><stop offset="0.55" stop-color="#62b8e2"/><stop offset="1" stop-color="#2a88c2"/></linearGradient></defs><path d="M0.4 0.9h3l0.8 0.8h4.1v4.6H0.4z" fill="#4aa6d6"/><path d="M0.4 2h7.9v4.3H0.4z" fill="url(#fg)"/></svg>
<div class="t" style="left:64.75px;top:264.55px;font-size:6.4px;color:#1a1a1a">Reklamácie</div>
<div style="left:50.75px;top:276.15px;width:2.5px;height:1px;background:#d4d4d4"></div>
<svg style="position:absolute;left:45.75px;top:273.4px" width="5.6" height="5.6"><rect x="0.5" y="0.5" width="4.6" height="4.6" fill="#f4f4f4" stroke="#b0b0b0" stroke-width="0.6"/><path d="M1.3 2.75h3" stroke="#3a62b0" stroke-width="0.7"/><path d="M2.8 1.25v3" stroke="#3a62b0" stroke-width="0.7"/></svg>
<svg style="position:absolute;left:53.25px;top:272.25px" width="9" height="7"><defs><linearGradient id="fg" x1="0" y1="0" x2="0" y2="1"><stop offset="0" stop-color="#b4e2f6"/><stop offset="0.55" stop-color="#62b8e2"/><stop offset="1" stop-color="#2a88c2"/></linearGradient></defs><path d="M0.4 0.9h3l0.8 0.8h4.1v4.6H0.4z" fill="#4aa6d6"/><path d="M0.4 2h7.9v4.3H0.4z" fill="url(#fg)"/></svg>
<div class="t" style="left:64.75px;top:273.53px;font-size:6.4px;color:#1a1a1a">Registrácia predajov v hotovosti</div>
<div style="left:50.75px;top:285.135px;width:2.5px;height:1px;background:#d4d4d4"></div>
<svg style="position:absolute;left:45.75px;top:282.385px" width="5.6" height="5.6"><rect x="0.5" y="0.5" width="4.6" height="4.6" fill="#f4f4f4" stroke="#b0b0b0" stroke-width="0.6"/><path d="M1.3 2.75h3" stroke="#3a62b0" stroke-width="0.7"/><path d="M2.8 1.25v3" stroke="#3a62b0" stroke-width="0.7"/></svg>
<svg style="position:absolute;left:53.25px;top:281.235px" width="9" height="7"><defs><linearGradient id="fg" x1="0" y1="0" x2="0" y2="1"><stop offset="0" stop-color="#b4e2f6"/><stop offset="0.55" stop-color="#62b8e2"/><stop offset="1" stop-color="#2a88c2"/></linearGradient></defs><path d="M0.4 0.9h3l0.8 0.8h4.1v4.6H0.4z" fill="#4aa6d6"/><path d="M0.4 2h7.9v4.3H0.4z" fill="url(#fg)"/></svg>
<div class="t" style="left:64.75px;top:282.52px;font-size:6.4px;color:#1a1a1a">Výkup, váženie a rozbory</div>
<div style="left:50.75px;top:294.12px;width:2.5px;height:1px;background:#d4d4d4"></div>
<svg style="position:absolute;left:45.75px;top:291.37px" width="5.6" height="5.6"><rect x="0.5" y="0.5" width="4.6" height="4.6" fill="#f4f4f4" stroke="#b0b0b0" stroke-width="0.6"/><path d="M1.3 2.75h3" stroke="#3a62b0" stroke-width="0.7"/><path d="M2.8 1.25v3" stroke="#3a62b0" stroke-width="0.7"/></svg>
<svg style="position:absolute;left:53.25px;top:290.22px" width="9" height="7"><defs><linearGradient id="fg" x1="0" y1="0" x2="0" y2="1"><stop offset="0" stop-color="#b4e2f6"/><stop offset="0.55" stop-color="#62b8e2"/><stop offset="1" stop-color="#2a88c2"/></linearGradient></defs><path d="M0.4 0.9h3l0.8 0.8h4.1v4.6H0.4z" fill="#4aa6d6"/><path d="M0.4 2h7.9v4.3H0.4z" fill="url(#fg)"/></svg>
<div class="t" style="left:64.75px;top:291.50px;font-size:6.4px;color:#1a1a1a">Rozvozové trasy</div>
<div style="left:50.75px;top:303.105px;width:2.5px;height:1px;background:#d4d4d4"></div>
<svg style="position:absolute;left:45.75px;top:300.355px" width="5.6" height="5.6"><rect x="0.5" y="0.5" width="4.6" height="4.6" fill="#f4f4f4" stroke="#b0b0b0" stroke-width="0.6"/><path d="M1.3 2.75h3" stroke="#3a62b0" stroke-width="0.7"/><path d="M2.8 1.25v3" stroke="#3a62b0" stroke-width="0.7"/></svg>
<svg style="position:absolute;left:53.25px;top:299.20500000000004px" width="9" height="7"><defs><linearGradient id="fg" x1="0" y1="0" x2="0" y2="1"><stop offset="0" stop-color="#b4e2f6"/><stop offset="0.55" stop-color="#62b8e2"/><stop offset="1" stop-color="#2a88c2"/></linearGradient></defs><path d="M0.4 0.9h3l0.8 0.8h4.1v4.6H0.4z" fill="#4aa6d6"/><path d="M0.4 2h7.9v4.3H0.4z" fill="url(#fg)"/></svg>
<div class="t" style="left:64.75px;top:300.49px;font-size:6.4px;color:#1a1a1a">Štatistické výkazy</div>
<div style="left:50.75px;top:312.09000000000003px;width:2.5px;height:1px;background:#d4d4d4"></div>
<svg style="position:absolute;left:45.75px;top:309.34000000000003px" width="5.6" height="5.6"><rect x="0.5" y="0.5" width="4.6" height="4.6" fill="#f4f4f4" stroke="#b0b0b0" stroke-width="0.6"/><path d="M1.3 2.75h3" stroke="#3a62b0" stroke-width="0.7"/><path d="M2.8 1.25v3" stroke="#3a62b0" stroke-width="0.7"/></svg>
<svg style="position:absolute;left:53.25px;top:308.19000000000005px" width="9" height="7"><defs><linearGradient id="fg" x1="0" y1="0" x2="0" y2="1"><stop offset="0" stop-color="#b4e2f6"/><stop offset="0.55" stop-color="#62b8e2"/><stop offset="1" stop-color="#2a88c2"/></linearGradient></defs><path d="M0.4 0.9h3l0.8 0.8h4.1v4.6H0.4z" fill="#4aa6d6"/><path d="M0.4 2h7.9v4.3H0.4z" fill="url(#fg)"/></svg>
<div class="t" style="left:64.75px;top:309.47px;font-size:6.4px;color:#1a1a1a">Register zmlúv</div>
<div style="left:50.75px;top:321.07499999999993px;width:2.5px;height:1px;background:#d4d4d4"></div>
<svg style="position:absolute;left:45.75px;top:318.32499999999993px" width="5.6" height="5.6"><rect x="0.5" y="0.5" width="4.6" height="4.6" fill="#f4f4f4" stroke="#b0b0b0" stroke-width="0.6"/><path d="M1.3 2.75h3" stroke="#3a62b0" stroke-width="0.7"/><path d="M2.8 1.25v3" stroke="#3a62b0" stroke-width="0.7"/></svg>
<svg style="position:absolute;left:53.25px;top:317.17499999999995px" width="9" height="7"><defs><linearGradient id="fg" x1="0" y1="0" x2="0" y2="1"><stop offset="0" stop-color="#b4e2f6"/><stop offset="0.55" stop-color="#62b8e2"/><stop offset="1" stop-color="#2a88c2"/></linearGradient></defs><path d="M0.4 0.9h3l0.8 0.8h4.1v4.6H0.4z" fill="#4aa6d6"/><path d="M0.4 2h7.9v4.3H0.4z" fill="url(#fg)"/></svg>
<div class="t" style="left:64.75px;top:318.46px;font-size:6.4px;color:#1a1a1a">Odpady</div>
<div style="left:41.5px;top:330.05999999999995px;width:2.5px;height:1px;background:#d4d4d4"></div>
<svg style="position:absolute;left:36.5px;top:327.30999999999995px" width="5.6" height="5.6"><rect x="0.5" y="0.5" width="4.6" height="4.6" fill="#f4f4f4" stroke="#b0b0b0" stroke-width="0.6"/><path d="M1.3 2.75h3" stroke="#3a62b0" stroke-width="0.7"/><path d="M2.8 1.25v3" stroke="#3a62b0" stroke-width="0.7"/></svg>
<svg style="position:absolute;left:44.0px;top:326.15999999999997px" width="9" height="7"><defs><linearGradient id="fg" x1="0" y1="0" x2="0" y2="1"><stop offset="0" stop-color="#b4e2f6"/><stop offset="0.55" stop-color="#62b8e2"/><stop offset="1" stop-color="#2a88c2"/></linearGradient></defs><path d="M0.4 0.9h3l0.8 0.8h4.1v4.6H0.4z" fill="#4aa6d6"/><path d="M0.4 2h7.9v4.3H0.4z" fill="url(#fg)"/></svg>
<div class="t" style="left:55.50px;top:327.44px;font-size:6.4px;color:#1a1a1a">Riadenie vzťahov so zákazníkmi (CRM)</div>
<div style="left:41.5px;top:339.04499999999996px;width:2.5px;height:1px;background:#d4d4d4"></div>
<svg style="position:absolute;left:36.5px;top:336.29499999999996px" width="5.6" height="5.6"><rect x="0.5" y="0.5" width="4.6" height="4.6" fill="#f4f4f4" stroke="#b0b0b0" stroke-width="0.6"/><path d="M1.3 2.75h3" stroke="#3a62b0" stroke-width="0.7"/><path d="M2.8 1.25v3" stroke="#3a62b0" stroke-width="0.7"/></svg>
<svg style="position:absolute;left:44.0px;top:335.145px" width="9" height="7"><defs><linearGradient id="fg" x1="0" y1="0" x2="0" y2="1"><stop offset="0" stop-color="#b4e2f6"/><stop offset="0.55" stop-color="#62b8e2"/><stop offset="1" stop-color="#2a88c2"/></linearGradient></defs><path d="M0.4 0.9h3l0.8 0.8h4.1v4.6H0.4z" fill="#4aa6d6"/><path d="M0.4 2h7.9v4.3H0.4z" fill="url(#fg)"/></svg>
<div class="t" style="left:55.50px;top:336.43px;font-size:6.4px;color:#1a1a1a">Komunikácia s partnermi</div>
<div style="left:41.5px;top:348.03px;width:2.5px;height:1px;background:#d4d4d4"></div>
<svg style="position:absolute;left:36.5px;top:345.28px" width="5.6" height="5.6"><rect x="0.5" y="0.5" width="4.6" height="4.6" fill="#f4f4f4" stroke="#b0b0b0" stroke-width="0.6"/><path d="M1.3 2.75h3" stroke="#3a62b0" stroke-width="0.7"/><path d="M2.8 1.25v3" stroke="#3a62b0" stroke-width="0.7"/></svg>
<svg style="position:absolute;left:44.0px;top:344.13px" width="9" height="7"><defs><linearGradient id="fg" x1="0" y1="0" x2="0" y2="1"><stop offset="0" stop-color="#b4e2f6"/><stop offset="0.55" stop-color="#62b8e2"/><stop offset="1" stop-color="#2a88c2"/></linearGradient></defs><path d="M0.4 0.9h3l0.8 0.8h4.1v4.6H0.4z" fill="#4aa6d6"/><path d="M0.4 2h7.9v4.3H0.4z" fill="url(#fg)"/></svg>
<div class="t" style="left:55.50px;top:345.41px;font-size:6.4px;color:#1a1a1a">Publikačný systém</div>
<div style="left:41.5px;top:357.015px;width:2.5px;height:1px;background:#d4d4d4"></div>
<svg style="position:absolute;left:36.5px;top:354.265px" width="5.6" height="5.6"><rect x="0.5" y="0.5" width="4.6" height="4.6" fill="#f4f4f4" stroke="#b0b0b0" stroke-width="0.6"/><path d="M1.3 2.75h3" stroke="#3a62b0" stroke-width="0.7"/><path d="M2.8 1.25v3" stroke="#3a62b0" stroke-width="0.7"/></svg>
<svg style="position:absolute;left:44.0px;top:353.115px" width="9" height="7"><defs><linearGradient id="fg" x1="0" y1="0" x2="0" y2="1"><stop offset="0" stop-color="#b4e2f6"/><stop offset="0.55" stop-color="#62b8e2"/><stop offset="1" stop-color="#2a88c2"/></linearGradient></defs><path d="M0.4 0.9h3l0.8 0.8h4.1v4.6H0.4z" fill="#4aa6d6"/><path d="M0.4 2h7.9v4.3H0.4z" fill="url(#fg)"/></svg>
<div class="t" style="left:55.50px;top:354.40px;font-size:6.4px;color:#1a1a1a">Financie</div>
<div style="left:41.5px;top:366.0px;width:2.5px;height:1px;background:#d4d4d4"></div>
<svg style="position:absolute;left:36.5px;top:363.25px" width="5.6" height="5.6"><rect x="0.5" y="0.5" width="4.6" height="4.6" fill="#f4f4f4" stroke="#b0b0b0" stroke-width="0.6"/><path d="M1.3 2.75h3" stroke="#3a62b0" stroke-width="0.7"/><path d="M2.8 1.25v3" stroke="#3a62b0" stroke-width="0.7"/></svg>
<svg style="position:absolute;left:44.0px;top:362.1px" width="9" height="7"><defs><linearGradient id="fg" x1="0" y1="0" x2="0" y2="1"><stop offset="0" stop-color="#b4e2f6"/><stop offset="0.55" stop-color="#62b8e2"/><stop offset="1" stop-color="#2a88c2"/></linearGradient></defs><path d="M0.4 0.9h3l0.8 0.8h4.1v4.6H0.4z" fill="#4aa6d6"/><path d="M0.4 2h7.9v4.3H0.4z" fill="url(#fg)"/></svg>
<div class="t" style="left:55.50px;top:363.38px;font-size:6.4px;color:#1a1a1a">Podvojné účtovníctvo</div>
</div>
<div style="left:216px;top:36px;width:584px;height:394px;background:#034a96"></div>
<div style="left:259px;top:36px;width:1px;height:394px;background:#6d94c4"></div>
<div style="left:260px;top:36px;width:1px;height:394px;background:#6d94c4"></div>
<div style="left:324px;top:36px;width:1px;height:394px;background:#9ab8da"></div>
<div style="left:389px;top:36px;width:1px;height:394px;background:#9ab8da"></div>
<div style="left:454px;top:36px;width:1px;height:394px;background:#9ab8da"></div>
<div style="left:519px;top:36px;width:1px;height:394px;background:#9ab8da"></div>
<div style="left:584px;top:36px;width:1px;height:394px;background:#9ab8da"></div>
<div style="left:649px;top:36px;width:1px;height:394px;background:#9ab8da"></div>
<div style="left:714px;top:36px;width:1px;height:394px;background:#9ab8da"></div>
<div style="left:216px;top:95px;width:584px;height:1px;background:#9ab8da"></div>
<div style="left:216px;top:155px;width:584px;height:1px;background:#9ab8da"></div>
<div style="left:216px;top:215px;width:584px;height:1px;background:#9ab8da"></div>
<div style="left:216px;top:275px;width:584px;height:1px;background:#9ab8da"></div>
<div style="left:216px;top:335px;width:584px;height:1px;background:#9ab8da"></div>
<div style="left:216px;top:395px;width:584px;height:1px;background:#9ab8da"></div>
<svg style="position:absolute;left:640px;top:36px" width="160" height="394" viewBox="640 36 160 394"><rect x="714" y="36" width="21" height="394" fill="#e9f0f8"/><g fill="#034a96"><rect x="715.10" y="36.80" width="2.9" height="2.5"/><rect x="715.10" y="40.58" width="2.9" height="2.5"/><rect x="715.10" y="44.36" width="2.9" height="2.5"/><rect x="715.10" y="48.14" width="2.9" height="2.5"/><rect x="715.10" y="51.92" width="2.9" height="2.5"/><rect x="715.10" y="55.70" width="2.9" height="2.5"/><rect x="715.10" y="59.48" width="2.9" height="2.5"/><rect x="715.10" y="63.26" width="2.9" height="2.5"/><rect x="715.10" y="67.04" width="2.9" height="2.5"/><rect x="715.10" y="70.82" width="2.9" height="2.5"/><rect x="715.10" y="74.60" width="2.9" height="2.5"/><rect x="715.10" y="78.38" width="2.9" height="2.5"/><rect x="715.10" y="82.16" width="2.9" height="2.5"/><rect x="715.10" y="85.94" width="2.9" height="2.5"/><rect x="715.10" y="89.72" width="2.9" height="2.5"/><rect x="715.10" y="93.50" width="2.9" height="2.5"/><rect x="715.10" y="97.28" width="2.9" height="2.5"/><rect x="715.10" y="101.06" width="2.9" height="2.5"/><rect x="715.10" y="104.84" width="2.9" height="2.5"/><rect x="715.10" y="108.62" width="2.9" height="2.5"/><rect x="715.10" y="112.40" width="2.9" height="2.5"/><rect x="715.10" y="116.18" width="2.9" height="2.5"/><rect x="715.10" y="119.96" width="2.9" height="2.5"/><rect x="715.10" y="123.74" width="2.9" height="2.5"/><rect x="715.10" y="127.52" width="2.9" height="2.5"/><rect x="715.10" y="131.30" width="2.9" height="2.5"/><rect x="715.10" y="135.08" width="2.9" height="2.5"/><rect x="715.10" y="138.86" width="2.9" height="2.5"/><rect x="715.10" y="142.64" width="2.9" height="2.5"/><rect x="715.10" y="146.42" width="2.9" height="2.5"/><rect x="715.10" y="150.20" width="2.9" height="2.5"/><rect x="715.10" y="153.98" width="2.9" height="2.5"/><rect x="715.10" y="157.76" width="2.9" height="2.5"/><rect x="715.10" y="161.54" width="2.9" height="2.5"/><rect x="715.10" y="165.32" width="2.9" height="2.5"/><rect x="715.10" y="169.10" width="2.9" height="2.5"/><rect x="715.10" y="172.88" width="2.9" height="2.5"/><rect x="715.10" y="176.66" width="2.9" height="2.5"/><rect x="715.10" y="180.44" width="2.9" height="2.5"/><rect x="715.10" y="184.22" width="2.9" height="2.5"/><rect x="715.10" y="188.00" width="2.9" height="2.5"/><rect x="715.10" y="191.78" width="2.9" height="2.5"/><rect x="715.10" y="195.56" width="2.9" height="2.5"/><rect x="715.10" y="199.34" width="2.9" height="2.5"/><rect x="715.10" y="203.12" width="2.9" height="2.5"/><rect x="715.10" y="206.90" width="2.9" height="2.5"/><rect x="715.10" y="210.68" width="2.9" height="2.5"/><rect x="715.10" y="214.46" width="2.9" height="2.5"/><rect x="715.10" y="218.24" width="2.9" height="2.5"/><rect x="715.10" y="222.02" width="2.9" height="2.5"/><rect x="715.10" y="225.80" width="2.9" height="2.5"/><rect x="715.10" y="229.58" width="2.9" height="2.5"/><rect x="715.10" y="233.36" width="2.9" height="2.5"/><rect x="715.10" y="237.14" width="2.9" height="2.5"/><rect x="715.10" y="240.92" width="2.9" height="2.5"/><rect x="715.10" y="244.70" width="2.9" height="2.5"/><rect x="715.10" y="248.48" width="2.9" height="2.5"/><rect x="715.10" y="252.26" width="2.9" height="2.5"/><rect x="715.10" y="256.04" width="2.9" height="2.5"/><rect x="715.10" y="259.82" width="2.9" height="2.5"/><rect x="715.10" y="263.60" width="2.9" height="2.5"/><rect x="715.10" y="267.38" width="2.9" height="2.5"/><rect x="715.10" y="271.16" width="2.9" height="2.5"/><rect x="715.10" y="274.94" width="2.9" height="2.5"/><rect x="715.10" y="278.72" width="2.9" height="2.5"/><rect x="715.10" y="282.50" width="2.9" height="2.5"/><rect x="715.10" y="286.28" width="2.9" height="2.5"/><rect x="715.10" y="290.06" width="2.9" height="2.5"/><rect x="715.10" y="293.84" width="2.9" height="2.5"/><rect x="715.10" y="297.62" width="2.9" height="2.5"/><rect x="715.10" y="301.40" width="2.9" height="2.5"/><rect x="715.10" y="305.18" width="2.9" height="2.5"/><rect x="715.10" y="308.96" width="2.9" height="2.5"/><rect x="715.10" y="312.74" width="2.9" height="2.5"/><rect x="715.10" y="316.52" width="2.9" height="2.5"/><rect x="715.10" y="320.30" width="2.9" height="2.5"/><rect x="715.10" y="324.08" width="2.9" height="2.5"/><rect x="715.10" y="327.86" width="2.9" height="2.5"/><rect x="715.10" y="331.64" width="2.9" height="2.5"/><rect x="715.10" y="335.42" width="2.9" height="2.5"/><rect x="715.10" y="339.20" width="2.9" height="2.5"/><rect x="715.10" y="342.98" width="2.9" height="2.5"/><rect x="715.10" y="346.76" width="2.9" height="2.5"/><rect x="715.10" y="350.54" width="2.9" height="2.5"/><rect x="715.10" y="354.32" width="2.9" height="2.5"/><rect x="715.10" y="358.10" width="2.9" height="2.5"/><rect x="715.10" y="361.88" width="2.9" height="2.5"/><rect x="715.10" y="365.66" width="2.9" height="2.5"/><rect x="715.10" y="369.44" width="2.9" height="2.5"/><rect x="715.10" y="373.22" width="2.9" height="2.5"/><rect x="715.10" y="377.00" width="2.9" height="2.5"/><rect x="715.10" y="380.78" width="2.9" height="2.5"/><rect x="715.10" y="384.56" width="2.9" height="2.5"/><rect x="715.10" y="388.34" width="2.9" height="2.5"/><rect x="715.10" y="392.12" width="2.9" height="2.5"/><rect x="715.10" y="395.90" width="2.9" height="2.5"/><rect x="715.10" y="399.68" width="2.9" height="2.5"/><rect x="715.10" y="403.46" width="2.9" height="2.5"/><rect x="715.10" y="407.24" width="2.9" height="2.5"/><rect x="715.10" y="411.02" width="2.9" height="2.5"/><rect x="715.10" y="414.80" width="2.9" height="2.5"/><rect x="715.10" y="418.58" width="2.9" height="2.5"/><rect x="715.10" y="422.36" width="2.9" height="2.5"/><rect x="715.10" y="426.14" width="2.9" height="2.5"/><rect x="715.10" y="429.92" width="2.9" height="2.5"/><rect x="719.10" y="97.28" width="2.9" height="2.5"/><rect x="719.10" y="101.06" width="2.9" height="2.5"/><rect x="719.10" y="104.84" width="2.9" height="2.5"/><rect x="719.10" y="108.62" width="2.9" height="2.5"/><rect x="719.10" y="112.40" width="2.9" height="2.5"/><rect x="719.10" y="116.18" width="2.9" height="2.5"/><rect x="719.10" y="119.96" width="2.9" height="2.5"/><rect x="719.10" y="123.74" width="2.9" height="2.5"/><rect x="719.10" y="127.52" width="2.9" height="2.5"/><rect x="719.10" y="131.30" width="2.9" height="2.5"/><rect x="719.10" y="135.08" width="2.9" height="2.5"/><rect x="719.10" y="138.86" width="2.9" height="2.5"/><rect x="719.10" y="142.64" width="2.9" height="2.5"/><rect x="719.10" y="146.42" width="2.9" height="2.5"/><rect x="719.10" y="150.20" width="2.9" height="2.5"/><rect x="719.10" y="153.98" width="2.9" height="2.5"/><rect x="719.10" y="157.76" width="2.9" height="2.5"/><rect x="719.10" y="161.54" width="2.9" height="2.5"/><rect x="719.10" y="165.32" width="2.9" height="2.5"/><rect x="719.10" y="169.10" width="2.9" height="2.5"/><rect x="719.10" y="172.88" width="2.9" height="2.5"/><rect x="719.10" y="176.66" width="2.9" height="2.5"/><rect x="719.10" y="180.44" width="2.9" height="2.5"/><rect x="719.10" y="184.22" width="2.9" height="2.5"/><rect x="719.10" y="188.00" width="2.9" height="2.5"/><rect x="719.10" y="191.78" width="2.9" height="2.5"/><rect x="719.10" y="195.56" width="2.9" height="2.5"/><rect x="719.10" y="199.34" width="2.9" height="2.5"/><rect x="719.10" y="203.12" width="2.9" height="2.5"/><rect x="719.10" y="206.90" width="2.9" height="2.5"/><rect x="719.10" y="210.68" width="2.9" height="2.5"/><rect x="719.10" y="214.46" width="2.9" height="2.5"/><rect x="719.10" y="218.24" width="2.9" height="2.5"/><rect x="719.10" y="222.02" width="2.9" height="2.5"/><rect x="719.10" y="225.80" width="2.9" height="2.5"/><rect x="719.10" y="229.58" width="2.9" height="2.5"/><rect x="719.10" y="233.36" width="2.9" height="2.5"/><rect x="719.10" y="237.14" width="2.9" height="2.5"/><rect x="719.10" y="240.92" width="2.9" height="2.5"/><rect x="719.10" y="244.70" width="2.9" height="2.5"/><rect x="719.10" y="248.48" width="2.9" height="2.5"/><rect x="719.10" y="252.26" width="2.9" height="2.5"/><rect x="719.10" y="256.04" width="2.9" height="2.5"/><rect x="719.10" y="259.82" width="2.9" height="2.5"/><rect x="719.10" y="263.60" width="2.9" height="2.5"/><rect x="719.10" y="267.38" width="2.9" height="2.5"/><rect x="719.10" y="271.16" width="2.9" height="2.5"/><rect x="719.10" y="274.94" width="2.9" height="2.5"/><rect x="719.10" y="278.72" width="2.9" height="2.5"/><rect x="719.10" y="282.50" width="2.9" height="2.5"/><rect x="719.10" y="286.28" width="2.9" height="2.5"/><rect x="719.10" y="290.06" width="2.9" height="2.5"/><rect x="719.10" y="293.84" width="2.9" height="2.5"/><rect x="719.10" y="297.62" width="2.9" height="2.5"/><rect x="719.10" y="301.40" width="2.9" height="2.5"/><rect x="719.10" y="305.18" width="2.9" height="2.5"/><rect x="719.10" y="308.96" width="2.9" height="2.5"/><rect x="719.10" y="312.74" width="2.9" height="2.5"/><rect x="719.10" y="316.52" width="2.9" height="2.5"/><rect x="719.10" y="320.30" width="2.9" height="2.5"/><rect x="719.10" y="324.08" width="2.9" height="2.5"/><rect x="719.10" y="327.86" width="2.9" height="2.5"/><rect x="719.10" y="331.64" width="2.9" height="2.5"/><rect x="719.10" y="335.42" width="2.9" height="2.5"/><rect x="719.10" y="339.20" width="2.9" height="2.5"/><rect x="719.10" y="342.98" width="2.9" height="2.5"/><rect x="719.10" y="346.76" width="2.9" height="2.5"/><rect x="719.10" y="350.54" width="2.9" height="2.5"/><rect x="719.10" y="354.32" width="2.9" height="2.5"/><rect x="719.10" y="358.10" width="2.9" height="2.5"/><rect x="719.10" y="361.88" width="2.9" height="2.5"/><rect x="719.10" y="365.66" width="2.9" height="2.5"/><rect x="719.10" y="369.44" width="2.9" height="2.5"/><rect x="719.10" y="373.22" width="2.9" height="2.5"/><rect x="719.10" y="377.00" width="2.9" height="2.5"/><rect x="719.10" y="380.78" width="2.9" height="2.5"/><rect x="719.10" y="384.56" width="2.9" height="2.5"/><rect x="719.10" y="388.34" width="2.9" height="2.5"/><rect x="719.10" y="392.12" width="2.9" height="2.5"/><rect x="719.10" y="395.90" width="2.9" height="2.5"/><rect x="719.10" y="399.68" width="2.9" height="2.5"/><rect x="719.10" y="403.46" width="2.9" height="2.5"/><rect x="719.10" y="407.24" width="2.9" height="2.5"/><rect x="719.10" y="411.02" width="2.9" height="2.5"/><rect x="719.10" y="414.80" width="2.9" height="2.5"/><rect x="719.10" y="418.58" width="2.9" height="2.5"/><rect x="719.10" y="422.36" width="2.9" height="2.5"/><rect x="719.10" y="426.14" width="2.9" height="2.5"/><rect x="719.10" y="429.92" width="2.9" height="2.5"/><rect x="723.10" y="97.28" width="2.9" height="2.5"/><rect x="723.10" y="101.06" width="2.9" height="2.5"/><rect x="723.10" y="104.84" width="2.9" height="2.5"/><rect x="723.10" y="108.62" width="2.9" height="2.5"/><rect x="723.10" y="112.40" width="2.9" height="2.5"/><rect x="723.10" y="116.18" width="2.9" height="2.5"/><rect x="723.10" y="119.96" width="2.9" height="2.5"/><rect x="723.10" y="123.74" width="2.9" height="2.5"/><rect x="723.10" y="127.52" width="2.9" height="2.5"/><rect x="723.10" y="131.30" width="2.9" height="2.5"/><rect x="723.10" y="135.08" width="2.9" height="2.5"/><rect x="723.10" y="138.86" width="2.9" height="2.5"/><rect x="723.10" y="142.64" width="2.9" height="2.5"/><rect x="723.10" y="146.42" width="2.9" height="2.5"/><rect x="723.10" y="150.20" width="2.9" height="2.5"/><rect x="723.10" y="153.98" width="2.9" height="2.5"/><rect x="723.10" y="157.76" width="2.9" height="2.5"/><rect x="723.10" y="161.54" width="2.9" height="2.5"/><rect x="723.10" y="165.32" width="2.9" height="2.5"/><rect x="723.10" y="169.10" width="2.9" height="2.5"/><rect x="723.10" y="172.88" width="2.9" height="2.5"/><rect x="723.10" y="176.66" width="2.9" height="2.5"/><rect x="723.10" y="180.44" width="2.9" height="2.5"/><rect x="723.10" y="184.22" width="2.9" height="2.5"/><rect x="723.10" y="188.00" width="2.9" height="2.5"/><rect x="723.10" y="191.78" width="2.9" height="2.5"/><rect x="723.10" y="195.56" width="2.9" height="2.5"/><rect x="723.10" y="199.34" width="2.9" height="2.5"/><rect x="723.10" y="203.12" width="2.9" height="2.5"/><rect x="723.10" y="206.90" width="2.9" height="2.5"/><rect x="723.10" y="210.68" width="2.9" height="2.5"/><rect x="723.10" y="214.46" width="2.9" height="2.5"/><rect x="723.10" y="218.24" width="2.9" height="2.5"/><rect x="723.10" y="222.02" width="2.9" height="2.5"/><rect x="723.10" y="225.80" width="2.9" height="2.5"/><rect x="723.10" y="229.58" width="2.9" height="2.5"/><rect x="723.10" y="233.36" width="2.9" height="2.5"/><rect x="723.10" y="237.14" width="2.9" height="2.5"/><rect x="723.10" y="240.92" width="2.9" height="2.5"/><rect x="723.10" y="244.70" width="2.9" height="2.5"/><rect x="723.10" y="248.48" width="2.9" height="2.5"/><rect x="723.10" y="252.26" width="2.9" height="2.5"/><rect x="723.10" y="256.04" width="2.9" height="2.5"/><rect x="723.10" y="259.82" width="2.9" height="2.5"/><rect x="723.10" y="263.60" width="2.9" height="2.5"/><rect x="723.10" y="267.38" width="2.9" height="2.5"/><rect x="723.10" y="271.16" width="2.9" height="2.5"/><rect x="723.10" y="274.94" width="2.9" height="2.5"/><rect x="723.10" y="278.72" width="2.9" height="2.5"/><rect x="723.10" y="282.50" width="2.9" height="2.5"/><rect x="723.10" y="286.28" width="2.9" height="2.5"/><rect x="723.10" y="290.06" width="2.9" height="2.5"/><rect x="723.10" y="293.84" width="2.9" height="2.5"/><rect x="723.10" y="297.62" width="2.9" height="2.5"/><rect x="723.10" y="301.40" width="2.9" height="2.5"/><rect x="723.10" y="305.18" width="2.9" height="2.5"/><rect x="723.10" y="308.96" width="2.9" height="2.5"/><rect x="723.10" y="312.74" width="2.9" height="2.5"/><rect x="723.10" y="316.52" width="2.9" height="2.5"/><rect x="723.10" y="320.30" width="2.9" height="2.5"/><rect x="723.10" y="324.08" width="2.9" height="2.5"/><rect x="723.10" y="327.86" width="2.9" height="2.5"/><rect x="723.10" y="331.64" width="2.9" height="2.5"/><rect x="723.10" y="335.42" width="2.9" height="2.5"/><rect x="723.10" y="339.20" width="2.9" height="2.5"/><rect x="723.10" y="342.98" width="2.9" height="2.5"/><rect x="723.10" y="346.76" width="2.9" height="2.5"/><rect x="723.10" y="350.54" width="2.9" height="2.5"/><rect x="723.10" y="354.32" width="2.9" height="2.5"/><rect x="723.10" y="358.10" width="2.9" height="2.5"/><rect x="723.10" y="361.88" width="2.9" height="2.5"/><rect x="723.10" y="365.66" width="2.9" height="2.5"/><rect x="723.10" y="369.44" width="2.9" height="2.5"/><rect x="723.10" y="373.22" width="2.9" height="2.5"/><rect x="723.10" y="377.00" width="2.9" height="2.5"/><rect x="723.10" y="380.78" width="2.9" height="2.5"/><rect x="723.10" y="384.56" width="2.9" height="2.5"/><rect x="723.10" y="388.34" width="2.9" height="2.5"/><rect x="723.10" y="392.12" width="2.9" height="2.5"/><rect x="723.10" y="395.90" width="2.9" height="2.5"/><rect x="723.10" y="399.68" width="2.9" height="2.5"/><rect x="723.10" y="403.46" width="2.9" height="2.5"/><rect x="723.10" y="407.24" width="2.9" height="2.5"/><rect x="723.10" y="411.02" width="2.9" height="2.5"/><rect x="723.10" y="414.80" width="2.9" height="2.5"/><rect x="723.10" y="418.58" width="2.9" height="2.5"/><rect x="723.10" y="422.36" width="2.9" height="2.5"/><rect x="723.10" y="426.14" width="2.9" height="2.5"/><rect x="723.10" y="429.92" width="2.9" height="2.5"/><rect x="727.10" y="97.28" width="2.9" height="2.5"/><rect x="727.10" y="101.06" width="2.9" height="2.5"/><rect x="727.10" y="104.84" width="2.9" height="2.5"/><rect x="727.10" y="108.62" width="2.9" height="2.5"/><rect x="727.10" y="112.40" width="2.9" height="2.5"/><rect x="727.10" y="116.18" width="2.9" height="2.5"/><rect x="727.10" y="119.96" width="2.9" height="2.5"/><rect x="727.10" y="123.74" width="2.9" height="2.5"/><rect x="727.10" y="127.52" width="2.9" height="2.5"/><rect x="727.10" y="131.30" width="2.9" height="2.5"/><rect x="727.10" y="135.08" width="2.9" height="2.5"/><rect x="727.10" y="138.86" width="2.9" height="2.5"/><rect x="727.10" y="142.64" width="2.9" height="2.5"/><rect x="727.10" y="146.42" width="2.9" height="2.5"/><rect x="727.10" y="150.20" width="2.9" height="2.5"/><rect x="727.10" y="153.98" width="2.9" height="2.5"/><rect x="727.10" y="157.76" width="2.9" height="2.5"/><rect x="727.10" y="161.54" width="2.9" height="2.5"/><rect x="727.10" y="165.32" width="2.9" height="2.5"/><rect x="727.10" y="169.10" width="2.9" height="2.5"/><rect x="727.10" y="172.88" width="2.9" height="2.5"/><rect x="727.10" y="176.66" width="2.9" height="2.5"/><rect x="727.10" y="180.44" width="2.9" height="2.5"/><rect x="727.10" y="184.22" width="2.9" height="2.5"/><rect x="727.10" y="188.00" width="2.9" height="2.5"/><rect x="727.10" y="191.78" width="2.9" height="2.5"/><rect x="727.10" y="195.56" width="2.9" height="2.5"/><rect x="727.10" y="199.34" width="2.9" height="2.5"/><rect x="727.10" y="203.12" width="2.9" height="2.5"/><rect x="727.10" y="206.90" width="2.9" height="2.5"/><rect x="727.10" y="210.68" width="2.9" height="2.5"/><rect x="727.10" y="214.46" width="2.9" height="2.5"/><rect x="727.10" y="218.24" width="2.9" height="2.5"/><rect x="727.10" y="222.02" width="2.9" height="2.5"/><rect x="727.10" y="225.80" width="2.9" height="2.5"/><rect x="727.10" y="229.58" width="2.9" height="2.5"/><rect x="727.10" y="233.36" width="2.9" height="2.5"/><rect x="727.10" y="237.14" width="2.9" height="2.5"/><rect x="727.10" y="240.92" width="2.9" height="2.5"/><rect x="727.10" y="244.70" width="2.9" height="2.5"/><rect x="727.10" y="248.48" width="2.9" height="2.5"/><rect x="727.10" y="252.26" width="2.9" height="2.5"/><rect x="727.10" y="256.04" width="2.9" height="2.5"/><rect x="727.10" y="259.82" width="2.9" height="2.5"/><rect x="727.10" y="263.60" width="2.9" height="2.5"/><rect x="727.10" y="267.38" width="2.9" height="2.5"/><rect x="727.10" y="271.16" width="2.9" height="2.5"/><rect x="727.10" y="274.94" width="2.9" height="2.5"/><rect x="727.10" y="278.72" width="2.9" height="2.5"/><rect x="727.10" y="282.50" width="2.9" height="2.5"/><rect x="727.10" y="286.28" width="2.9" height="2.5"/><rect x="727.10" y="290.06" width="2.9" height="2.5"/><rect x="727.10" y="293.84" width="2.9" height="2.5"/><rect x="727.10" y="297.62" width="2.9" height="2.5"/><rect x="727.10" y="301.40" width="2.9" height="2.5"/><rect x="727.10" y="305.18" width="2.9" height="2.5"/><rect x="727.10" y="308.96" width="2.9" height="2.5"/><rect x="727.10" y="312.74" width="2.9" height="2.5"/><rect x="727.10" y="316.52" width="2.9" height="2.5"/><rect x="727.10" y="320.30" width="2.9" height="2.5"/><rect x="727.10" y="324.08" width="2.9" height="2.5"/><rect x="727.10" y="327.86" width="2.9" height="2.5"/><rect x="727.10" y="331.64" width="2.9" height="2.5"/><rect x="727.10" y="335.42" width="2.9" height="2.5"/><rect x="727.10" y="339.20" width="2.9" height="2.5"/><rect x="727.10" y="342.98" width="2.9" height="2.5"/><rect x="727.10" y="346.76" width="2.9" height="2.5"/><rect x="727.10" y="350.54" width="2.9" height="2.5"/><rect x="727.10" y="354.32" width="2.9" height="2.5"/><rect x="727.10" y="358.10" width="2.9" height="2.5"/><rect x="727.10" y="361.88" width="2.9" height="2.5"/><rect x="727.10" y="365.66" width="2.9" height="2.5"/><rect x="727.10" y="369.44" width="2.9" height="2.5"/><rect x="727.10" y="373.22" width="2.9" height="2.5"/><rect x="727.10" y="377.00" width="2.9" height="2.5"/><rect x="727.10" y="380.78" width="2.9" height="2.5"/><rect x="727.10" y="384.56" width="2.9" height="2.5"/><rect x="727.10" y="388.34" width="2.9" height="2.5"/><rect x="727.10" y="392.12" width="2.9" height="2.5"/><rect x="727.10" y="395.90" width="2.9" height="2.5"/><rect x="727.10" y="399.68" width="2.9" height="2.5"/><rect x="727.10" y="403.46" width="2.9" height="2.5"/><rect x="727.10" y="407.24" width="2.9" height="2.5"/><rect x="727.10" y="411.02" width="2.9" height="2.5"/><rect x="727.10" y="414.80" width="2.9" height="2.5"/><rect x="727.10" y="418.58" width="2.9" height="2.5"/><rect x="727.10" y="422.36" width="2.9" height="2.5"/><rect x="727.10" y="426.14" width="2.9" height="2.5"/><rect x="727.10" y="429.92" width="2.9" height="2.5"/><rect x="731.10" y="97.28" width="2.9" height="2.5"/><rect x="731.10" y="101.06" width="2.9" height="2.5"/><rect x="731.10" y="104.84" width="2.9" height="2.5"/><rect x="731.10" y="108.62" width="2.9" height="2.5"/><rect x="731.10" y="112.40" width="2.9" height="2.5"/><rect x="731.10" y="116.18" width="2.9" height="2.5"/><rect x="731.10" y="119.96" width="2.9" height="2.5"/><rect x="731.10" y="123.74" width="2.9" height="2.5"/><rect x="731.10" y="127.52" width="2.9" height="2.5"/><rect x="731.10" y="131.30" width="2.9" height="2.5"/><rect x="731.10" y="135.08" width="2.9" height="2.5"/><rect x="731.10" y="138.86" width="2.9" height="2.5"/><rect x="731.10" y="142.64" width="2.9" height="2.5"/><rect x="731.10" y="146.42" width="2.9" height="2.5"/><rect x="731.10" y="150.20" width="2.9" height="2.5"/><rect x="731.10" y="153.98" width="2.9" height="2.5"/><rect x="731.10" y="157.76" width="2.9" height="2.5"/><rect x="731.10" y="161.54" width="2.9" height="2.5"/><rect x="731.10" y="165.32" width="2.9" height="2.5"/><rect x="731.10" y="169.10" width="2.9" height="2.5"/><rect x="731.10" y="172.88" width="2.9" height="2.5"/><rect x="731.10" y="176.66" width="2.9" height="2.5"/><rect x="731.10" y="180.44" width="2.9" height="2.5"/><rect x="731.10" y="184.22" width="2.9" height="2.5"/><rect x="731.10" y="188.00" width="2.9" height="2.5"/><rect x="731.10" y="191.78" width="2.9" height="2.5"/><rect x="731.10" y="195.56" width="2.9" height="2.5"/><rect x="731.10" y="199.34" width="2.9" height="2.5"/><rect x="731.10" y="203.12" width="2.9" height="2.5"/><rect x="731.10" y="206.90" width="2.9" height="2.5"/><rect x="731.10" y="210.68" width="2.9" height="2.5"/><rect x="731.10" y="214.46" width="2.9" height="2.5"/><rect x="731.10" y="218.24" width="2.9" height="2.5"/><rect x="731.10" y="222.02" width="2.9" height="2.5"/><rect x="731.10" y="225.80" width="2.9" height="2.5"/><rect x="731.10" y="229.58" width="2.9" height="2.5"/><rect x="731.10" y="233.36" width="2.9" height="2.5"/><rect x="731.10" y="237.14" width="2.9" height="2.5"/><rect x="731.10" y="240.92" width="2.9" height="2.5"/><rect x="731.10" y="244.70" width="2.9" height="2.5"/><rect x="731.10" y="248.48" width="2.9" height="2.5"/><rect x="731.10" y="252.26" width="2.9" height="2.5"/><rect x="731.10" y="256.04" width="2.9" height="2.5"/><rect x="731.10" y="259.82" width="2.9" height="2.5"/><rect x="731.10" y="263.60" width="2.9" height="2.5"/><rect x="731.10" y="267.38" width="2.9" height="2.5"/><rect x="731.10" y="271.16" width="2.9" height="2.5"/><rect x="731.10" y="274.94" width="2.9" height="2.5"/><rect x="731.10" y="278.72" width="2.9" height="2.5"/><rect x="731.10" y="282.50" width="2.9" height="2.5"/><rect x="731.10" y="286.28" width="2.9" height="2.5"/><rect x="731.10" y="290.06" width="2.9" height="2.5"/><rect x="731.10" y="293.84" width="2.9" height="2.5"/><rect x="731.10" y="297.62" width="2.9" height="2.5"/><rect x="731.10" y="301.40" width="2.9" height="2.5"/><rect x="731.10" y="305.18" width="2.9" height="2.5"/><rect x="731.10" y="308.96" width="2.9" height="2.5"/><rect x="731.10" y="312.74" width="2.9" height="2.5"/><rect x="731.10" y="316.52" width="2.9" height="2.5"/><rect x="731.10" y="320.30" width="2.9" height="2.5"/><rect x="731.10" y="324.08" width="2.9" height="2.5"/><rect x="731.10" y="327.86" width="2.9" height="2.5"/><rect x="731.10" y="331.64" width="2.9" height="2.5"/><rect x="731.10" y="335.42" width="2.9" height="2.5"/><rect x="731.10" y="339.20" width="2.9" height="2.5"/><rect x="731.10" y="342.98" width="2.9" height="2.5"/><rect x="731.10" y="346.76" width="2.9" height="2.5"/><rect x="731.10" y="350.54" width="2.9" height="2.5"/><rect x="731.10" y="354.32" width="2.9" height="2.5"/><rect x="731.10" y="358.10" width="2.9" height="2.5"/><rect x="731.10" y="361.88" width="2.9" height="2.5"/><rect x="731.10" y="365.66" width="2.9" height="2.5"/><rect x="731.10" y="369.44" width="2.9" height="2.5"/><rect x="731.10" y="373.22" width="2.9" height="2.5"/><rect x="731.10" y="377.00" width="2.9" height="2.5"/><rect x="731.10" y="380.78" width="2.9" height="2.5"/><rect x="731.10" y="384.56" width="2.9" height="2.5"/><rect x="731.10" y="388.34" width="2.9" height="2.5"/><rect x="731.10" y="392.12" width="2.9" height="2.5"/><rect x="731.10" y="395.90" width="2.9" height="2.5"/><rect x="731.10" y="399.68" width="2.9" height="2.5"/><rect x="731.10" y="403.46" width="2.9" height="2.5"/><rect x="731.10" y="407.24" width="2.9" height="2.5"/><rect x="731.10" y="411.02" width="2.9" height="2.5"/><rect x="731.10" y="414.80" width="2.9" height="2.5"/><rect x="731.10" y="418.58" width="2.9" height="2.5"/><rect x="731.10" y="422.36" width="2.9" height="2.5"/><rect x="731.10" y="426.14" width="2.9" height="2.5"/><rect x="731.10" y="429.92" width="2.9" height="2.5"/><rect x="719.30" y="51.3" width="2.8" height="2.8"/><rect x="723.20" y="51.3" width="2.8" height="2.8"/><rect x="727.10" y="51.3" width="2.8" height="2.8"/><rect x="731.00" y="51.3" width="2.8" height="2.8"/></g><rect x="719" y="36" width="16" height="15" fill="#fff"/><rect x="719" y="54.6" width="16" height="40.6" fill="#fff"/><defs><clipPath id="cq"><rect x="640" y="36" width="74" height="72"/></clipPath></defs><g clip-path="url(#cq)"><ellipse cx="681.7" cy="65" rx="32.4" ry="30.4" fill="#fff"/><ellipse cx="682.2" cy="65.4" rx="17.2" ry="16.1" fill="#034a96"/><line x1="682.3" y1="49" x2="682.3" y2="82" stroke="#9ab8da" stroke-width="0.9"/><line x1="665" y1="65.4" x2="699.5" y2="65.4" stroke="#9ab8da" stroke-width="0.9"/><polygon points="682.6,75.4 694,66.2 713.6,83.8 701.7,94" fill="#fff"/></g><rect x="640" y="95" width="160" height="1" fill="#9ab8da"/><rect x="649" y="36" width="1" height="72" fill="#9ab8da" opacity="0.55"/></svg>
<div class="t" style="left:739.00px;top:39.61px;font-size:7.9px;color:#fff;-webkit-text-stroke:0.3px #fff;letter-spacing:1.0px">CENTRÁLNY</div>
<div class="t" style="left:739.00px;top:49.21px;font-size:7.9px;color:#fff;-webkit-text-stroke:0.3px #fff;letter-spacing:0.9px;transform-origin:0 0;transform:scaleX(1.12)">MOZOG</div>
<div class="t" style="left:739.00px;top:58.41px;font-size:7.9px;color:#fff;-webkit-text-stroke:0.3px #fff;letter-spacing:0.95px">FIRMY</div>
<svg style="position:absolute;left:279px;top:48px" width="18" height="13" viewBox="0 0 18 13"><rect x="5" y="1.6" width="11.5" height="6.5" fill="#eeeeee"/><ellipse cx="7.6" cy="3.3" rx="1.4" ry="0.9" fill="#22d42a"/><ellipse cx="14" cy="3.8" rx="1.2" ry="1.6" fill="#22d42a"/><rect x="1" y="3" width="11" height="7" fill="#f7f7f7"/><ellipse cx="4.5" cy="6.8" rx="1.2" ry="1.9" fill="#12d81e"/><ellipse cx="11" cy="6.8" rx="1.2" ry="1.9" fill="#12d81e"/><rect x="6.6" y="4.2" width="2.4" height="5" fill="#d6d6d6"/><rect x="13.6" y="6.5" width="2.8" height="4" fill="#767676"/><rect x="1" y="10.6" width="15" height="1.6" fill="#8fb0d8" opacity="0.35"/></svg>
<div class="t" style="left:137.50px;width:300px;text-align:center;top:65.60px;font-size:5.2px;color:#e8f0fa">Ovládací panel</div>
<div class="t" style="left:137.20px;width:300px;text-align:center;top:72.34px;font-size:5.5px;color:#e8f0fa">pokladničného pre...</div>
<svg style="position:absolute;left:348.5px;top:51px" width="12" height="16" viewBox="0 0 12 16"><rect x="1" y="1" width="10.5" height="13" fill="#fafafa"/><rect x="1" y="0.8" width="10.5" height="1.3" fill="#3a8ce8"/><text x="6.2" y="11.2" font-size="9.5" text-anchor="middle" fill="#3a3a3a" font-family="Liberation Sans" letter-spacing="-0.6">13</text><path d="M3 12.5h6" stroke="#999" stroke-width="0.6"/><rect x="1" y="14.3" width="10.5" height="0.8" fill="#9ab8e0" opacity="0.6"/></svg>
<div style="left:342px;top:70.7px;width:24.7px;height:6.5px;background:#5a83b8"></div>
<div class="t" style="left:342.60px;top:71.60px;font-size:5.2px;color:#fff">Paragóny</div>
<div style="left:233.8px;top:107px;width:542.2px;height:303.5px;background:#fff;border:1px solid #e6e9ee;border-top:none"></div>
<div style="left:233.8px;top:107px;width:542.2px;height:13.8px;background:#ebebeb"></div>
<svg style="position:absolute;left:236.5px;top:111px" width="8" height="8" viewBox="0 0 8 8"><path d="M1 7l1-3 4-3.5 1.5 1.5L4 5.5z" fill="#fff" stroke="#bbb" stroke-width="0.4"/></svg>
<div class="t" style="left:247.00px;top:112.13px;font-size:5.87px;color:#4a4a4a;font-weight:bold">Ovládací panel pokladničného predaja</div>
<div class="t" style="left:731.00px;top:111.94px;font-size:5.5px;color:#c8a070">3</div>
<svg style="position:absolute;left:736px;top:108px" width="40" height="12" viewBox="0 0 40 12"><line x1="3" y1="6" x2="8.5" y2="6" stroke="#333" stroke-width="0.9"/><rect x="16.3" y="3.6" width="4.6" height="4.6" fill="none" stroke="#333" stroke-width="0.9"/><path d="M28.3 3.5l4.6 4.8M32.9 3.5l-4.6 4.8" stroke="#111" stroke-width="1.1"/></svg>
<div style="left:240px;top:125.3px;width:530px;height:240px;background:#f7fafd;border:1px solid #e4ecf8"></div>
<div style="left:316px;top:131.5px;width:110px;height:9.5px;background:#deeafd"></div>
<div class="t" style="left:317.50px;top:134.14px;font-size:6.1px;color:#1e3550;font-weight:bold">Predajka</div>
<div class="t" style="left:246.00px;top:136.03px;font-size:5.4px;color:#222">Typ dokladu</div>
<svg style="position:absolute;left:0;top:139.20px" width="320" height="1" viewBox="0 0 320 1"><g fill="#8a8a8a"><rect x="309.30" y="0" width="1" height="1"/><rect x="305.85" y="0" width="1" height="1"/><rect x="302.40" y="0" width="1" height="1"/><rect x="298.95" y="0" width="1" height="1"/><rect x="295.50" y="0" width="1" height="1"/><rect x="292.05" y="0" width="1" height="1"/><rect x="288.60" y="0" width="1" height="1"/><rect x="285.15" y="0" width="1" height="1"/><rect x="281.70" y="0" width="1" height="1"/><rect x="278.25" y="0" width="1" height="1"/></g></svg>
<div style="left:240px;top:147px;width:190px;height:86px;overflow:hidden">
<div style="left:76px;top:2.40px;width:101px;height:8.8px;background:#deeafd"></div>
<div class="t" style="left:6px;top:7.23px;font-size:5.4px;color:#222">Identifikácia odberateľa</div>
<svg style="position:absolute;left:-240px;top:10.40px" width="320" height="1" viewBox="0 0 320 1"><g fill="#8a8a8a"><rect x="309.30" y="0" width="1" height="1"/><rect x="305.85" y="0" width="1" height="1"/></g></svg>
<div style="left:76px;top:14.40px;width:101px;height:8.8px;background:#deeafd"></div>
<div class="t" style="left:6px;top:19.23px;font-size:5.4px;color:#222">IČO odberateľa</div>
<svg style="position:absolute;left:-240px;top:22.40px" width="320" height="1" viewBox="0 0 320 1"><g fill="#8a8a8a"><rect x="309.30" y="0" width="1" height="1"/><rect x="305.85" y="0" width="1" height="1"/><rect x="302.40" y="0" width="1" height="1"/><rect x="298.95" y="0" width="1" height="1"/><rect x="295.50" y="0" width="1" height="1"/><rect x="292.05" y="0" width="1" height="1"/><rect x="288.60" y="0" width="1" height="1"/></g></svg>
<div style="left:76px;top:26.40px;width:101px;height:8.8px;background:#deeafd"></div>
<div class="t" style="left:6px;top:31.23px;font-size:5.4px;color:#222">DIČ odberateľa</div>
<svg style="position:absolute;left:-240px;top:34.40px" width="320" height="1" viewBox="0 0 320 1"><g fill="#8a8a8a"><rect x="309.30" y="0" width="1" height="1"/><rect x="305.85" y="0" width="1" height="1"/><rect x="302.40" y="0" width="1" height="1"/><rect x="298.95" y="0" width="1" height="1"/><rect x="295.50" y="0" width="1" height="1"/><rect x="292.05" y="0" width="1" height="1"/><rect x="288.60" y="0" width="1" height="1"/></g></svg>
<div style="left:76px;top:38.40px;width:101px;height:8.8px;background:#deeafd"></div>
<div class="t" style="left:6px;top:43.23px;font-size:5.4px;color:#222">Odberateľ</div>
<svg style="position:absolute;left:-240px;top:46.40px" width="320" height="1" viewBox="0 0 320 1"><g fill="#8a8a8a"><rect x="309.30" y="0" width="1" height="1"/><rect x="305.85" y="0" width="1" height="1"/><rect x="302.40" y="0" width="1" height="1"/><rect x="298.95" y="0" width="1" height="1"/><rect x="295.50" y="0" width="1" height="1"/><rect x="292.05" y="0" width="1" height="1"/><rect x="288.60" y="0" width="1" height="1"/><rect x="285.15" y="0" width="1" height="1"/><rect x="281.70" y="0" width="1" height="1"/><rect x="278.25" y="0" width="1" height="1"/><rect x="274.80" y="0" width="1" height="1"/></g></svg>
<div style="left:76px;top:50.40px;width:101px;height:8.8px;background:#deeafd"></div>
<div class="t" style="left:6px;top:55.23px;font-size:5.4px;color:#222">Ulica odberateľa</div>
<svg style="position:absolute;left:-240px;top:58.40px" width="320" height="1" viewBox="0 0 320 1"><g fill="#8a8a8a"><rect x="309.30" y="0" width="1" height="1"/><rect x="305.85" y="0" width="1" height="1"/><rect x="302.40" y="0" width="1" height="1"/><rect x="298.95" y="0" width="1" height="1"/><rect x="295.50" y="0" width="1" height="1"/><rect x="292.05" y="0" width="1" height="1"/><rect x="288.60" y="0" width="1" height="1"/></g></svg>
<div style="left:76px;top:62.40px;width:101px;height:8.8px;background:#deeafd"></div>
<div class="t" style="left:6px;top:67.23px;font-size:5.4px;color:#222">Obec odberateľa</div>
<svg style="position:absolute;left:-240px;top:70.40px" width="320" height="1" viewBox="0 0 320 1"><g fill="#8a8a8a"><rect x="309.30" y="0" width="1" height="1"/><rect x="305.85" y="0" width="1" height="1"/><rect x="302.40" y="0" width="1" height="1"/><rect x="298.95" y="0" width="1" height="1"/><rect x="295.50" y="0" width="1" height="1"/><rect x="292.05" y="0" width="1" height="1"/></g></svg>
<div style="left:76px;top:74.40px;width:101px;height:8.8px;background:#deeafd"></div>
<div class="t" style="left:6px;top:79.23px;font-size:5.4px;color:#222">PSČ odberateľa</div>
<svg style="position:absolute;left:-240px;top:82.40px" width="320" height="1" viewBox="0 0 320 1"><g fill="#8a8a8a"><rect x="309.30" y="0" width="1" height="1"/><rect x="305.85" y="0" width="1" height="1"/><rect x="302.40" y="0" width="1" height="1"/><rect x="298.95" y="0" width="1" height="1"/><rect x="295.50" y="0" width="1" height="1"/><rect x="292.05" y="0" width="1" height="1"/><rect x="288.60" y="0" width="1" height="1"/></g></svg>
</div>
<div style="left:316px;top:233px;width:101px;height:1px;background:#e6edf6"></div>
<div style="left:417.7px;top:157.8px;width:8.2px;height:72px;background:#eef3f8"></div>
<div style="left:417.7px;top:157.8px;width:8.2px;height:39.7px;background:#d6e4f2"></div>
<svg style="position:absolute;left:418px;top:150.5px" width="8" height="5" viewBox="0 0 8 5"><path d="M2 3.8l2.1-2.1 2.1 2.1" stroke="#222" stroke-width="1" fill="none"/></svg>
<svg style="position:absolute;left:418px;top:227px" width="8" height="5" viewBox="0 0 8 5"><path d="M2 1.2l2.1 2.1 2.1-2.1" stroke="#222" stroke-width="1" fill="none"/></svg>
<div style="left:316px;top:244.4px;width:110px;height:9.6px;background:#deeafd"></div>
<div class="t" style="left:246.00px;top:249.63px;font-size:5.4px;color:#222">EAN tovaru</div>
<svg style="position:absolute;left:0;top:252.80px" width="320" height="1" viewBox="0 0 320 1"><g fill="#8a8a8a"><rect x="309.30" y="0" width="1" height="1"/><rect x="305.85" y="0" width="1" height="1"/><rect x="302.40" y="0" width="1" height="1"/><rect x="298.95" y="0" width="1" height="1"/><rect x="295.50" y="0" width="1" height="1"/><rect x="292.05" y="0" width="1" height="1"/><rect x="288.60" y="0" width="1" height="1"/><rect x="285.15" y="0" width="1" height="1"/><rect x="281.70" y="0" width="1" height="1"/><rect x="278.25" y="0" width="1" height="1"/></g></svg>
<div style="left:316px;top:256.3px;width:110px;height:9.6px;background:#deeafd"></div>
<div class="t" style="left:246.00px;top:261.53px;font-size:5.4px;color:#222">Kód tovaru</div>
<svg style="position:absolute;left:0;top:264.70px" width="320" height="1" viewBox="0 0 320 1"><g fill="#8a8a8a"><rect x="309.30" y="0" width="1" height="1"/><rect x="305.85" y="0" width="1" height="1"/><rect x="302.40" y="0" width="1" height="1"/><rect x="298.95" y="0" width="1" height="1"/><rect x="295.50" y="0" width="1" height="1"/><rect x="292.05" y="0" width="1" height="1"/><rect x="288.60" y="0" width="1" height="1"/><rect x="285.15" y="0" width="1" height="1"/><rect x="281.70" y="0" width="1" height="1"/><rect x="278.25" y="0" width="1" height="1"/><rect x="274.80" y="0" width="1" height="1"/></g></svg>
<div class="t" style="left:316.60px;top:259.11px;font-size:5.3px;color:#333">HXCBLI_R</div>
<div style="left:316px;top:268.3px;width:110px;height:9.6px;background:#deeafd"></div>
<div class="t" style="left:246.00px;top:273.53px;font-size:5.4px;color:#222">Názov tovaru</div>
<svg style="position:absolute;left:0;top:276.70px" width="320" height="1" viewBox="0 0 320 1"><g fill="#8a8a8a"><rect x="309.30" y="0" width="1" height="1"/><rect x="305.85" y="0" width="1" height="1"/><rect x="302.40" y="0" width="1" height="1"/><rect x="298.95" y="0" width="1" height="1"/><rect x="295.50" y="0" width="1" height="1"/><rect x="292.05" y="0" width="1" height="1"/><rect x="288.60" y="0" width="1" height="1"/><rect x="285.15" y="0" width="1" height="1"/><rect x="281.70" y="0" width="1" height="1"/></g></svg>
<div class="t" style="left:316.60px;top:271.11px;font-size:5.3px;color:#333">Horské kolo XC Blizzard - Reprezentant</div>
<div style="left:316px;top:280.1px;width:110px;height:9.6px;background:#deeafd"></div>
<div class="t" style="left:246.00px;top:285.33px;font-size:5.4px;color:#222">Základná predajná cena</div>
<svg style="position:absolute;left:0;top:288.50px" width="320" height="1" viewBox="0 0 320 1"><g fill="#8a8a8a"><rect x="309.30" y="0" width="1" height="1"/><rect x="305.85" y="0" width="1" height="1"/></g></svg>
<div class="t" style="right:375.70px;top:282.74px;font-size:5.5px;color:#333">72 600,00</div>
<div style="left:316px;top:292px;width:110px;height:9.6px;background:#deeafd"></div>
<div class="t" style="left:246.00px;top:297.23px;font-size:5.4px;color:#222">MJ</div>
<svg style="position:absolute;left:0;top:300.40px" width="320" height="1" viewBox="0 0 320 1"><g fill="#8a8a8a"><rect x="309.30" y="0" width="1" height="1"/><rect x="305.85" y="0" width="1" height="1"/><rect x="302.40" y="0" width="1" height="1"/><rect x="298.95" y="0" width="1" height="1"/><rect x="295.50" y="0" width="1" height="1"/><rect x="292.05" y="0" width="1" height="1"/><rect x="288.60" y="0" width="1" height="1"/><rect x="285.15" y="0" width="1" height="1"/><rect x="281.70" y="0" width="1" height="1"/><rect x="278.25" y="0" width="1" height="1"/><rect x="274.80" y="0" width="1" height="1"/><rect x="271.35" y="0" width="1" height="1"/><rect x="267.90" y="0" width="1" height="1"/><rect x="264.45" y="0" width="1" height="1"/><rect x="261.00" y="0" width="1" height="1"/><rect x="257.55" y="0" width="1" height="1"/></g></svg>
<div class="t" style="left:316.60px;top:294.81px;font-size:5.3px;color:#333">ks</div>
<div style="left:316px;top:304px;width:110px;height:9.6px;background:#deeafd"></div>
<div class="t" style="left:246.00px;top:309.23px;font-size:5.4px;color:#222">%&nbsp; DPH</div>
<svg style="position:absolute;left:0;top:312.40px" width="320" height="1" viewBox="0 0 320 1"><g fill="#8a8a8a"><rect x="309.30" y="0" width="1" height="1"/><rect x="305.85" y="0" width="1" height="1"/><rect x="302.40" y="0" width="1" height="1"/><rect x="298.95" y="0" width="1" height="1"/><rect x="295.50" y="0" width="1" height="1"/><rect x="292.05" y="0" width="1" height="1"/><rect x="288.60" y="0" width="1" height="1"/><rect x="285.15" y="0" width="1" height="1"/><rect x="281.70" y="0" width="1" height="1"/><rect x="278.25" y="0" width="1" height="1"/><rect x="274.80" y="0" width="1" height="1"/><rect x="271.35" y="0" width="1" height="1"/><rect x="267.90" y="0" width="1" height="1"/></g></svg>
<div class="t" style="right:375.70px;top:306.64px;font-size:5.5px;color:#333">21</div>
<div class="t" style="left:246.00px;top:325.19px;font-size:5.45px;color:#222">Hľadaná hodnota</div>
<div style="left:246.3px;top:333.1px;width:93.3px;height:10.2px;background:#fff;border:1px solid #dde7f4"></div>
<div class="t" style="left:344.00px;top:325.20px;font-size:5.44px;color:#222">Údaj pre hľadanie</div>
<div style="left:344.3px;top:332.5px;width:81.3px;height:10.8px;background:#deeafd"></div>
<div class="t" style="left:345.50px;top:334.87px;font-size:6.3px;color:#333">Kód tovaru</div>
<div style="left:432.2px;top:131.3px;width:333.5px;height:212px;background:#f8fbfe;border:1px solid #e6eef8"></div>
<div style="left:433px;top:131.7px;width:272px;height:8.9px;background:#f1f5fb"></div>
<div style="left:456.6px;top:131.7px;width:1px;height:8.9px;background:#ffffff"></div>
<div style="left:471.8px;top:131.7px;width:1px;height:8.9px;background:#ffffff"></div>
<div style="left:630.2px;top:131.7px;width:1px;height:8.9px;background:#ffffff"></div>
<div style="left:676.0px;top:131.7px;width:1px;height:8.9px;background:#ffffff"></div>
<div class="t" style="left:433.90px;top:134.30px;font-size:5.2px;color:#3a4450">Množs...</div>
<div class="t" style="left:458.50px;top:134.30px;font-size:5.2px;color:#3a4450">MJ</div>
<div class="t" style="left:473.70px;top:134.07px;font-size:5.47px;color:#3a4450">Názov produktu</div>
<div class="t" style="left:631.50px;top:134.34px;font-size:5.15px;color:#3a4450">Celkom za položku</div>
<div class="t" style="left:677.70px;top:134.26px;font-size:5.24px;color:#3a4450">Medzisúčet</div>
<div style="left:433px;top:140.6px;width:272px;height:11.3px;background:#e0eafc"></div>
<div style="left:456.6px;top:140.6px;width:1px;height:11.3px;background:#ffffff"></div>
<div style="left:471.8px;top:140.6px;width:1px;height:11.3px;background:#ffffff"></div>
<div style="left:630.2px;top:140.6px;width:1px;height:11.3px;background:#ffffff"></div>
<div style="left:676.0px;top:140.6px;width:1px;height:11.3px;background:#ffffff"></div>
<div class="t" style="right:345.00px;top:143.61px;font-size:6.6px;color:#1c2e44;font-weight:bold">1,00</div>
<div class="t" style="left:458.70px;top:143.61px;font-size:6.6px;color:#1c2e44;font-weight:bold">ks</div>
<div class="t" style="left:473.90px;top:143.61px;font-size:6.6px;color:#1c2e44;font-weight:bold">Přední vidlice RST Capa T6</div>
<div class="t" style="right:125.80px;top:143.61px;font-size:6.6px;color:#1c2e44;font-weight:bold">1 220,90</div>
<div style="left:687.5px;top:142.79999999999998px;width:6.2px;height:6.2px;background:#f4f7fb;border:0.6px solid #c9d6e6"></div>
<div style="left:433px;top:151.9px;width:272px;height:10.1px;background:#d2e0fa"></div>
<div style="left:456.6px;top:151.9px;width:1px;height:10.1px;background:#ffffff"></div>
<div style="left:471.8px;top:151.9px;width:1px;height:10.1px;background:#ffffff"></div>
<div style="left:630.2px;top:151.9px;width:1px;height:10.1px;background:#ffffff"></div>
<div style="left:676.0px;top:151.9px;width:1px;height:10.1px;background:#ffffff"></div>
<div class="t" style="right:345.00px;top:153.91px;font-size:6.6px;color:#1c2e44;font-weight:bold">3,00</div>
<div class="t" style="left:458.70px;top:153.91px;font-size:6.6px;color:#1c2e44;font-weight:bold">ks</div>
<div class="t" style="left:473.90px;top:153.91px;font-size:6.6px;color:#1c2e44;font-weight:bold">Přední vidlice RST Gila TnL olejová uzamykatelná</div>
<div class="t" style="right:125.80px;top:153.91px;font-size:6.6px;color:#1c2e44;font-weight:bold">4 719,00</div>
<div style="left:687.5px;top:154.1px;width:6.2px;height:6.2px;background:#f4f7fb;border:0.6px solid #c9d6e6"></div>
<div style="left:433px;top:162px;width:272px;height:10px;background:#0d4a72"></div>
<div style="left:456.6px;top:162px;width:1px;height:10px;background:#3a7096"></div>
<div style="left:471.8px;top:162px;width:1px;height:10px;background:#3a7096"></div>
<div style="left:630.2px;top:162px;width:1px;height:10px;background:#3a7096"></div>
<div style="left:676.0px;top:162px;width:1px;height:10px;background:#3a7096"></div>
<div class="t" style="right:345.00px;top:164.71px;font-size:6.6px;color:#ffffff;font-weight:bold">1,00</div>
<div class="t" style="left:458.70px;top:164.71px;font-size:6.6px;color:#ffffff;font-weight:bold">ks</div>
<div class="t" style="left:473.90px;top:164.71px;font-size:6.6px;color:#ffffff;font-weight:bold">Horské kolo XC Blizzard - Reprezentant</div>
<div class="t" style="right:125.80px;top:164.71px;font-size:6.6px;color:#ffffff;font-weight:bold">72 600,00</div>
<div style="left:687.5px;top:164.2px;width:6.2px;height:6.2px;background:#9ab2c8;border:0.6px solid #9ab2c8"></div>
<div style="left:756px;top:140px;width:9.3px;height:195px;background:#f3f6fa"></div>
<div style="left:756.5px;top:218.7px;width:8.4px;height:115.8px;background:#d6e4f2"></div>
<svg style="position:absolute;left:757px;top:133.5px" width="8" height="5" viewBox="0 0 8 5"><path d="M2 3.8l2.1-2.1 2.1 2.1" stroke="#222" stroke-width="1" fill="none"/></svg>
<svg style="position:absolute;left:757px;top:337px" width="8" height="5" viewBox="0 0 8 5"><path d="M2 1.2l2.1 2.1 2.1-2.1" stroke="#222" stroke-width="1" fill="none"/></svg>
<div class="t" style="left:629.60px;top:355.20px;font-size:5.2px;color:#222">Medzisúčet</div>
<svg style="position:absolute;left:0;top:358.20px" width="320" height="1" viewBox="0 0 320 1"><g fill="#8a8a8a"></g></svg>
<div style="left:690.4px;top:349.9px;width:75.6px;height:10px;background:#deeafd"></div>
<div class="t" style="right:34.90px;top:351.93px;font-size:6.7px;color:#2a2a2a;font-weight:bold;letter-spacing:0.4px">78 539,90</div>
<div style="left:450.2px;top:192.5px;width:294.5px;height:145px;background:#fff;border:1px solid #8fb4d4"></div>
<div style="left:450.2px;top:192.5px;width:294.5px;height:13.5px;background:#1b4a6b"></div>
<svg style="position:absolute;left:453.5px;top:194.5px" width="9" height="9" viewBox="0 0 9 9"><polygon points="1,0.5 8.2,4.5 1,8.5" fill="#fff"/></svg>
<div class="t" style="left:463.70px;top:197.31px;font-size:5.9px;color:#fff;font-weight:bold">Úhrada paragónu</div>
<div class="t" style="left:699.00px;top:197.46px;font-size:5.6px;color:#fff;font-weight:bold">1</div>
<svg style="position:absolute;left:705px;top:193px" width="40" height="13" viewBox="0 0 40 13"><line x1="3" y1="6.8" x2="8.3" y2="6.8" stroke="#fff" stroke-width="0.9"/><rect x="15.2" y="4.5" width="4.5" height="4.5" fill="none" stroke="#fff" stroke-width="0.9"/><path d="M28.2 4.3l4.6 4.7M32.8 4.3l-4.6 4.7" stroke="#fff" stroke-width="0.9"/></svg>
<div style="left:456.3px;top:210.5px;width:282px;height:103.7px;background:#f7fafd;border:1px solid #e4ecf8"></div>
<div class="t" style="left:460.20px;top:215.90px;font-size:5.2px;color:#222">Celkom k úhrade</div>
<div style="left:461px;top:223.5px;width:272.7px;height:40.9px;background:#deeafd"></div>
<div class="t" style="right:65.00px;top:228.79px;font-size:32.5px;color:#18324a;font-weight:bold;letter-spacing:1.8px;-webkit-text-stroke:0.8px #18324a">78 540,00</div>
<div class="t" style="left:460.00px;top:276.86px;font-size:5.6px;color:#222">Vrátiť</div>
<div style="left:461px;top:285px;width:103px;height:22.2px;background:#deeafd"></div>
<div class="t" style="right:235.50px;top:288.10px;font-size:16.3px;color:#18324a;font-weight:bold;letter-spacing:0.95px;-webkit-text-stroke:0.4px #18324a">1 460,00</div>
<div class="t" style="left:630.00px;top:277.20px;font-size:5.2px;color:#222">Prijaté</div>
<div style="left:631.2px;top:285px;width:102.5px;height:22.2px;background:#dcfdb8"></div>
<div class="t" style="right:65.50px;top:287.70px;font-size:16.3px;color:#18324a;font-weight:bold;letter-spacing:0.92px;-webkit-text-stroke:0.4px #18324a">80 000,00</div>
<div style="left:456.5px;top:320.7px;width:64px;height:10.5px;background:#4d86b8"></div>
<div class="t" style="left:457.00px;top:323.66px;font-size:5.6px;color:#a9c9e8">F6</div>
<div class="t" style="left:478.50px;top:323.79px;font-size:5.45px;color:#fff">Iné platidlá</div>
<div style="left:524.7px;top:320.7px;width:63.8px;height:10.5px;background:#4d86b8"></div>
<div class="t" style="left:533.70px;top:323.90px;font-size:5.32px;color:#7fa9d0">Previesť na doklad</div>
<svg style="position:absolute;left:582.5px;top:322.5px" width="5" height="6" viewBox="0 0 5 6"><path d="M1.5 1l2 2-2 2" stroke="#b0cce8" stroke-width="0.8" fill="none"/></svg>
<div style="left:654.5px;top:320.5px;width:40.1px;height:10.9px;background:#0d4a7e"></div>
<div class="t" style="left:670.80px;top:323.66px;font-size:5.6px;color:#fff">OK</div>
<div style="left:698.3px;top:320.7px;width:40.3px;height:10.5px;background:#4d86b8"></div>
<div class="t" style="left:699.50px;top:323.83px;font-size:5.4px;color:#a9c9e8">ESC</div>
<div class="t" style="left:715.30px;top:323.83px;font-size:5.4px;color:#fff">Storno</div>
<div style="left:314px;top:366px;width:382px;height:40px;overflow:hidden">
<div style="left:0.40px;top:2.40px;width:74.60px;height:10.50px;background:#4d86b8"></div>
<div class="t" style="left:-22.30px;width:120px;text-align:center;top:5.51px;font-size:5.9px;font-weight:bold;color:#ffffff">OVLÁDANIE</div>
<svg style="position:absolute;left:69.00px;top:4.90px" width="4" height="6"><path d="M0.8 0.8L3 3 0.8 5.2z" fill="#fff"/></svg>
<div style="left:0.40px;top:14.70px;width:74.60px;height:10.50px;background:#4d86b8"></div>
<div class="t" style="left:-22.30px;width:120px;text-align:center;top:17.34px;font-size:6.45px;font-weight:bold;color:#ffffff">Hľadať podľa</div>
<svg style="position:absolute;left:69.00px;top:17.20px" width="4" height="6"><path d="M0.8 0.8L3 3 0.8 5.2z" fill="#fff"/></svg>
<div style="left:0.40px;top:26.90px;width:74.60px;height:10.20px;background:#4d86b8"></div>
<div class="t" style="left:1.60px;top:29.50px;font-size:6.5px;color:#a9c9e8;-webkit-text-stroke:0">F9</div>
<div class="t" style="left:-18.70px;width:120px;text-align:center;top:29.54px;font-size:6.45px;font-weight:bold;color:#ffffff">Výber produktu</div>
<div style="left:76.70px;top:2.40px;width:74.20px;height:10.50px;background:#4d86b8"></div>
<div class="t" style="left:77.90px;top:5.00px;font-size:6.5px;color:#a9c9e8;-webkit-text-stroke:0">F6</div>
<div class="t" style="left:57.40px;width:120px;text-align:center;top:5.04px;font-size:6.45px;font-weight:bold;color:#ffffff">Detail položky</div>
<div style="left:76.70px;top:14.70px;width:74.20px;height:10.50px;background:#4d86b8"></div>
<div class="t" style="left:77.90px;top:17.30px;font-size:6.5px;color:#a9c9e8;-webkit-text-stroke:0">F2</div>
<div class="t" style="left:57.40px;width:120px;text-align:center;top:17.34px;font-size:6.45px;font-weight:bold;color:#ffffff">Detail paragónu</div>
<div style="left:76.70px;top:26.90px;width:74.20px;height:10.20px;background:#4d86b8"></div>
<div class="t" style="left:53.80px;width:120px;text-align:center;top:29.54px;font-size:6.45px;font-weight:bold;color:#80aad3">Rozlišovacie atribúty</div>
<div style="left:152.70px;top:2.40px;width:75.60px;height:10.50px;background:#4d86b8"></div>
<div class="t" style="left:153.90px;top:5.00px;font-size:6.5px;color:#a9c9e8;-webkit-text-stroke:0">F7</div>
<div class="t" style="left:134.10px;width:120px;text-align:center;top:5.04px;font-size:6.45px;font-weight:bold;color:#ffffff">Zľava za doklad</div>
<div style="left:152.70px;top:14.70px;width:75.60px;height:10.50px;background:#4d86b8"></div>
<div class="t" style="left:130.50px;width:120px;text-align:center;top:17.34px;font-size:6.45px;font-weight:bold;color:#80aad3">Vrátiť doklad</div>
<div style="left:152.70px;top:26.90px;width:75.60px;height:10.20px;background:#4d86b8"></div>
<div class="t" style="left:153.90px;top:29.50px;font-size:6.5px;color:#a9c9e8;-webkit-text-stroke:0">F4</div>
<div class="t" style="left:134.10px;width:120px;text-align:center;top:29.54px;font-size:6.45px;font-weight:bold;color:#ffffff">Zrušiť doklad</div>
<div style="left:231.00px;top:2.40px;width:74.40px;height:10.50px;background:#4d86b8"></div>
<div class="t" style="left:208.20px;width:120px;text-align:center;top:5.51px;font-size:5.9px;font-weight:bold;color:#80aad3">NÁVRATKA</div>
<div style="left:231.00px;top:14.70px;width:74.40px;height:10.50px;background:#4d86b8"></div>
<div class="t" style="left:232.20px;top:17.30px;font-size:6.5px;color:#a9c9e8;-webkit-text-stroke:0">F10</div>
<div class="t" style="left:213.00px;width:120px;text-align:center;top:17.34px;font-size:6.45px;font-weight:bold;color:#ffffff">Stav zásuvky</div>
<div style="left:231.00px;top:26.90px;width:74.40px;height:10.20px;background:#4d86b8"></div>
<div class="t" style="left:232.20px;top:29.50px;font-size:6.5px;color:#a9c9e8;-webkit-text-stroke:0">F12</div>
<div class="t" style="left:213.00px;width:120px;text-align:center;top:29.54px;font-size:6.45px;font-weight:bold;color:#ffffff">Otvorenie zásuvky</div>
</div>
<div style="left:620.8px;top:366.9px;width:74.5px;height:13.5px;background:#f5f9fd"></div>
<div style="left:620.8px;top:380.5px;width:74.5px;height:22.6px;background:#4d86b8"></div>
<div class="t" style="left:508.00px;width:300px;text-align:center;top:386.70px;font-size:12.4px;color:#6d9fcc;font-weight:bold">PLATIŤ</div></body></html>
